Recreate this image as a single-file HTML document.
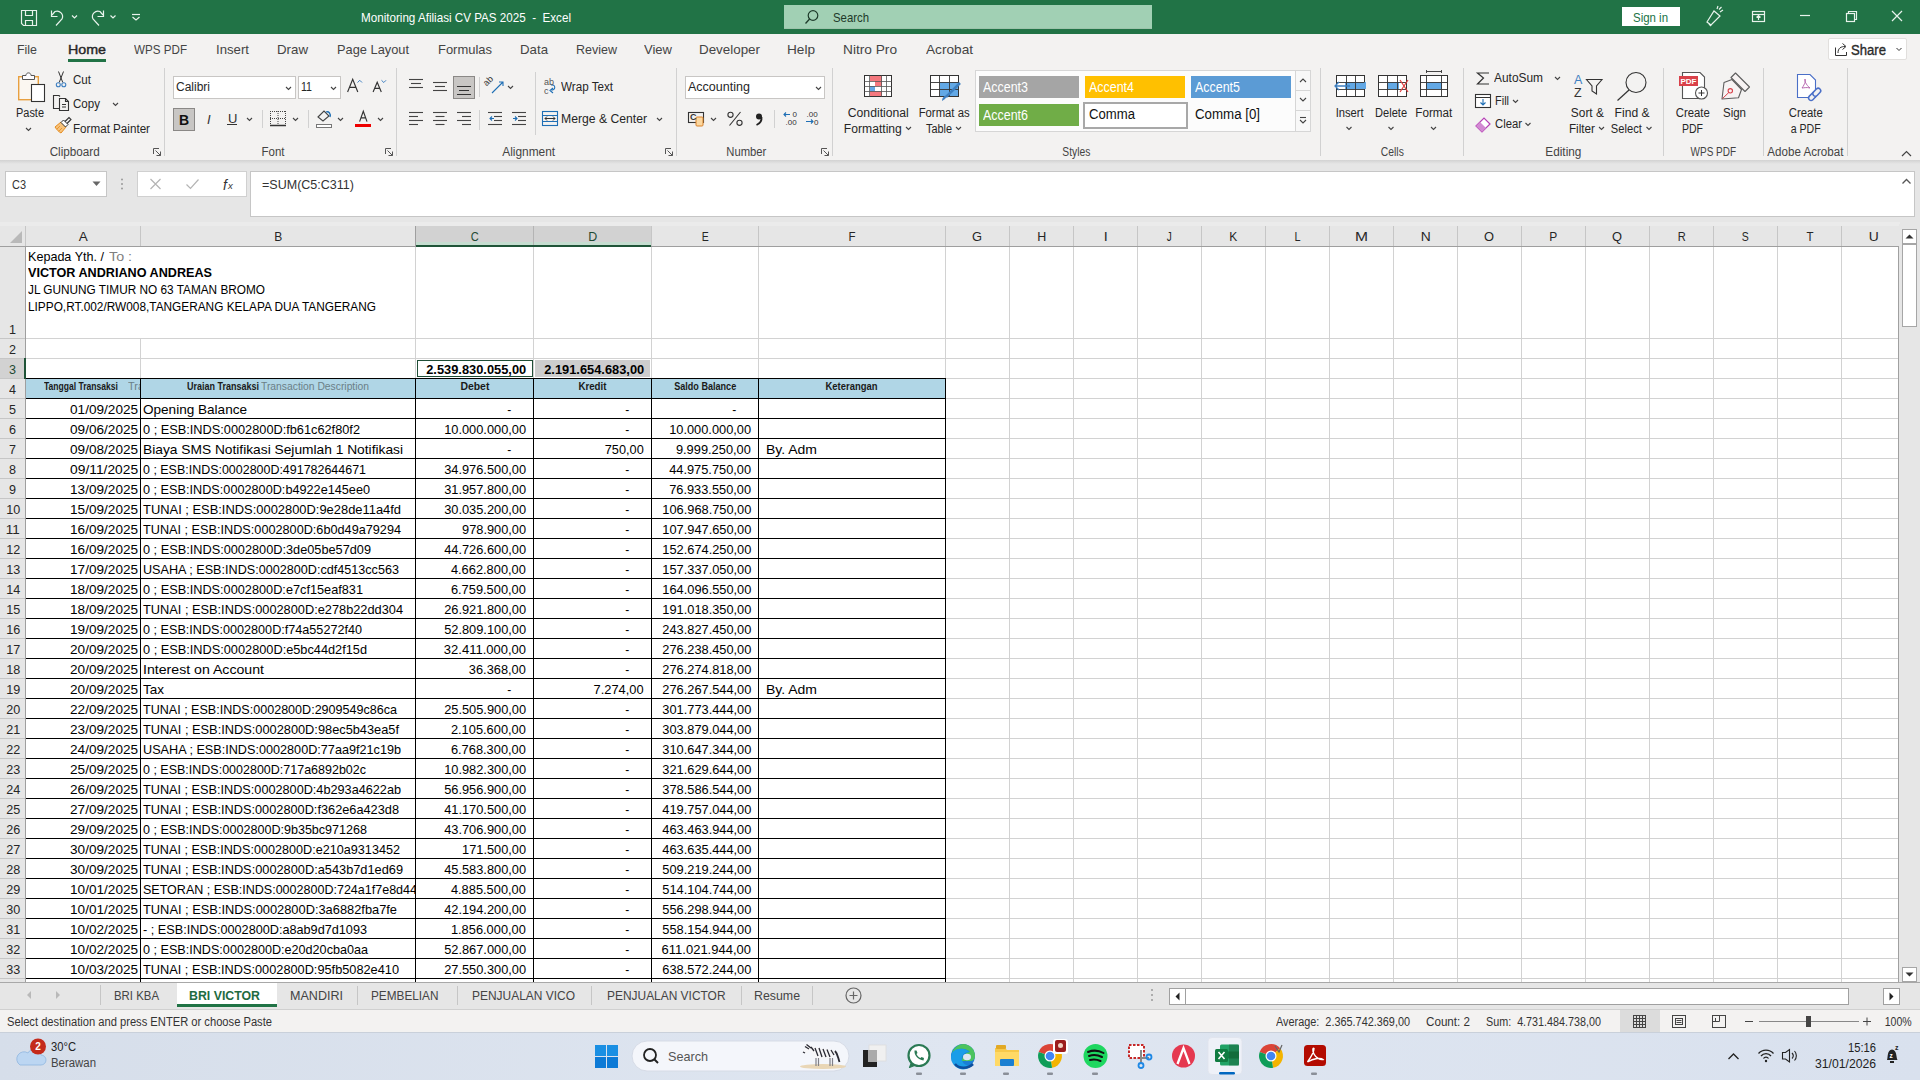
<!DOCTYPE html>
<html><head><meta charset="utf-8"><title>Excel</title>
<style>
html,body{margin:0;padding:0;}
body{width:1920px;height:1080px;overflow:hidden;position:relative;background:#fff;font-family:"Liberation Sans", sans-serif;}
.t{position:absolute;white-space:pre;line-height:1;}
.r{position:absolute;box-sizing:border-box;}
svg.r{overflow:visible;}
</style></head><body>
<div class="r" style="left:0px;top:0px;width:1920px;height:34px;background:#217346;"></div><div class="r" style="left:0px;top:34px;width:1920px;height:126px;background:#f3f2f1;"></div><div class="r" style="left:0px;top:160px;width:1920px;height:64px;background:#e6e6e6;"></div><div class="r" style="left:0px;top:160px;width:1920px;height:4px;background:linear-gradient(#d2d2d2,#e6e6e6);"></div><div class="r" style="left:0px;top:222px;width:1900px;height:24px;background:#e6e6e6;"></div><div class="r" style="left:0px;top:246px;width:25px;height:736px;background:#e6e6e6;"></div><div class="r" style="left:26px;top:247px;width:1873px;height:735px;background:#fff;"></div><svg class="r" style="left:0px;top:0px;" width="1920" height="1080" viewBox="0 0 1920 1080"><rect x="140" y="246" width="1" height="736" fill="#d2d2d2"/><rect x="415" y="246" width="1" height="736" fill="#d2d2d2"/><rect x="533" y="246" width="1" height="736" fill="#d2d2d2"/><rect x="651" y="246" width="1" height="736" fill="#d2d2d2"/><rect x="758" y="246" width="1" height="736" fill="#d2d2d2"/><rect x="945" y="246" width="1" height="736" fill="#d2d2d2"/><rect x="1009" y="246" width="1" height="736" fill="#d2d2d2"/><rect x="1073" y="246" width="1" height="736" fill="#d2d2d2"/><rect x="1137" y="246" width="1" height="736" fill="#d2d2d2"/><rect x="1201" y="246" width="1" height="736" fill="#d2d2d2"/><rect x="1265" y="246" width="1" height="736" fill="#d2d2d2"/><rect x="1329" y="246" width="1" height="736" fill="#d2d2d2"/><rect x="1393" y="246" width="1" height="736" fill="#d2d2d2"/><rect x="1457" y="246" width="1" height="736" fill="#d2d2d2"/><rect x="1521" y="246" width="1" height="736" fill="#d2d2d2"/><rect x="1585" y="246" width="1" height="736" fill="#d2d2d2"/><rect x="1649" y="246" width="1" height="736" fill="#d2d2d2"/><rect x="1713" y="246" width="1" height="736" fill="#d2d2d2"/><rect x="1777" y="246" width="1" height="736" fill="#d2d2d2"/><rect x="1841" y="246" width="1" height="736" fill="#d2d2d2"/><rect x="26" y="338" width="1873" height="1" fill="#d2d2d2"/><rect x="26" y="358" width="1873" height="1" fill="#d2d2d2"/><rect x="26" y="378" width="1873" height="1" fill="#d2d2d2"/><rect x="26" y="398" width="1873" height="1" fill="#d2d2d2"/><rect x="26" y="418" width="1873" height="1" fill="#d2d2d2"/><rect x="26" y="438" width="1873" height="1" fill="#d2d2d2"/><rect x="26" y="458" width="1873" height="1" fill="#d2d2d2"/><rect x="26" y="478" width="1873" height="1" fill="#d2d2d2"/><rect x="26" y="498" width="1873" height="1" fill="#d2d2d2"/><rect x="26" y="518" width="1873" height="1" fill="#d2d2d2"/><rect x="26" y="538" width="1873" height="1" fill="#d2d2d2"/><rect x="26" y="558" width="1873" height="1" fill="#d2d2d2"/><rect x="26" y="578" width="1873" height="1" fill="#d2d2d2"/><rect x="26" y="598" width="1873" height="1" fill="#d2d2d2"/><rect x="26" y="618" width="1873" height="1" fill="#d2d2d2"/><rect x="26" y="638" width="1873" height="1" fill="#d2d2d2"/><rect x="26" y="658" width="1873" height="1" fill="#d2d2d2"/><rect x="26" y="678" width="1873" height="1" fill="#d2d2d2"/><rect x="26" y="698" width="1873" height="1" fill="#d2d2d2"/><rect x="26" y="718" width="1873" height="1" fill="#d2d2d2"/><rect x="26" y="738" width="1873" height="1" fill="#d2d2d2"/><rect x="26" y="758" width="1873" height="1" fill="#d2d2d2"/><rect x="26" y="778" width="1873" height="1" fill="#d2d2d2"/><rect x="26" y="798" width="1873" height="1" fill="#d2d2d2"/><rect x="26" y="818" width="1873" height="1" fill="#d2d2d2"/><rect x="26" y="838" width="1873" height="1" fill="#d2d2d2"/><rect x="26" y="858" width="1873" height="1" fill="#d2d2d2"/><rect x="26" y="878" width="1873" height="1" fill="#d2d2d2"/><rect x="26" y="898" width="1873" height="1" fill="#d2d2d2"/><rect x="26" y="918" width="1873" height="1" fill="#d2d2d2"/><rect x="26" y="938" width="1873" height="1" fill="#d2d2d2"/><rect x="26" y="958" width="1873" height="1" fill="#d2d2d2"/><rect x="26" y="978" width="1873" height="1" fill="#d2d2d2"/></svg><div class="r" style="left:140px;top:247px;width:1px;height:91px;background:#fff;"></div><svg class="r" style="left:0px;top:0px;" width="1920" height="1080" viewBox="0 0 1920 1080"><rect x="0" y="222" width="1900" height="4" fill="#ebebeb"/><rect x="25" y="226" width="1" height="20" fill="#c6c6c6"/><rect x="140" y="226" width="1" height="20" fill="#c6c6c6"/><rect x="415" y="226" width="1" height="20" fill="#c6c6c6"/><rect x="533" y="226" width="1" height="20" fill="#c6c6c6"/><rect x="651" y="226" width="1" height="20" fill="#c6c6c6"/><rect x="758" y="226" width="1" height="20" fill="#c6c6c6"/><rect x="945" y="226" width="1" height="20" fill="#c6c6c6"/><rect x="1009" y="226" width="1" height="20" fill="#c6c6c6"/><rect x="1073" y="226" width="1" height="20" fill="#c6c6c6"/><rect x="1137" y="226" width="1" height="20" fill="#c6c6c6"/><rect x="1201" y="226" width="1" height="20" fill="#c6c6c6"/><rect x="1265" y="226" width="1" height="20" fill="#c6c6c6"/><rect x="1329" y="226" width="1" height="20" fill="#c6c6c6"/><rect x="1393" y="226" width="1" height="20" fill="#c6c6c6"/><rect x="1457" y="226" width="1" height="20" fill="#c6c6c6"/><rect x="1521" y="226" width="1" height="20" fill="#c6c6c6"/><rect x="1585" y="226" width="1" height="20" fill="#c6c6c6"/><rect x="1649" y="226" width="1" height="20" fill="#c6c6c6"/><rect x="1713" y="226" width="1" height="20" fill="#c6c6c6"/><rect x="1777" y="226" width="1" height="20" fill="#c6c6c6"/><rect x="1841" y="226" width="1" height="20" fill="#c6c6c6"/><rect x="0" y="246" width="1900" height="1" fill="#9f9f9f"/><rect x="25" y="246" width="1" height="736" fill="#9f9f9f"/><rect x="416" y="226" width="235" height="16" fill="#d2d2d2"/><rect x="416" y="242" width="235" height="3" fill="#c5ddd0"/><rect x="415" y="226" width="1" height="20" fill="#9f9f9f"/><rect x="533" y="226" width="1" height="19" fill="#b4b4b4"/><rect x="416" y="245" width="235" height="2" fill="#1f5438"/><rect x="0" y="359" width="24" height="19" fill="#d2d2d2"/><rect x="0" y="338" width="25" height="1" fill="#c6c6c6"/><rect x="0" y="358" width="25" height="1" fill="#c6c6c6"/><rect x="0" y="378" width="25" height="1" fill="#c6c6c6"/><rect x="0" y="398" width="25" height="1" fill="#c6c6c6"/><rect x="0" y="418" width="25" height="1" fill="#c6c6c6"/><rect x="0" y="438" width="25" height="1" fill="#c6c6c6"/><rect x="0" y="458" width="25" height="1" fill="#c6c6c6"/><rect x="0" y="478" width="25" height="1" fill="#c6c6c6"/><rect x="0" y="498" width="25" height="1" fill="#c6c6c6"/><rect x="0" y="518" width="25" height="1" fill="#c6c6c6"/><rect x="0" y="538" width="25" height="1" fill="#c6c6c6"/><rect x="0" y="558" width="25" height="1" fill="#c6c6c6"/><rect x="0" y="578" width="25" height="1" fill="#c6c6c6"/><rect x="0" y="598" width="25" height="1" fill="#c6c6c6"/><rect x="0" y="618" width="25" height="1" fill="#c6c6c6"/><rect x="0" y="638" width="25" height="1" fill="#c6c6c6"/><rect x="0" y="658" width="25" height="1" fill="#c6c6c6"/><rect x="0" y="678" width="25" height="1" fill="#c6c6c6"/><rect x="0" y="698" width="25" height="1" fill="#c6c6c6"/><rect x="0" y="718" width="25" height="1" fill="#c6c6c6"/><rect x="0" y="738" width="25" height="1" fill="#c6c6c6"/><rect x="0" y="758" width="25" height="1" fill="#c6c6c6"/><rect x="0" y="778" width="25" height="1" fill="#c6c6c6"/><rect x="0" y="798" width="25" height="1" fill="#c6c6c6"/><rect x="0" y="818" width="25" height="1" fill="#c6c6c6"/><rect x="0" y="838" width="25" height="1" fill="#c6c6c6"/><rect x="0" y="858" width="25" height="1" fill="#c6c6c6"/><rect x="0" y="878" width="25" height="1" fill="#c6c6c6"/><rect x="0" y="898" width="25" height="1" fill="#c6c6c6"/><rect x="0" y="918" width="25" height="1" fill="#c6c6c6"/><rect x="0" y="938" width="25" height="1" fill="#c6c6c6"/><rect x="0" y="958" width="25" height="1" fill="#c6c6c6"/><rect x="0" y="978" width="25" height="1" fill="#c6c6c6"/><path d="M22 231 L22 243 L10 243 Z" fill="#b9b9b9"/></svg><div class="t" style="left:78.66px;top:230.00px;font-size:13px;color:#262626;transform:scaleX(1.0379);transform-origin:center top;">A</div><div class="t" style="left:273.66px;top:230.00px;font-size:13px;color:#262626;transform:scaleX(0.9226);transform-origin:center top;">B</div><div class="t" style="left:469.81px;top:230.00px;font-size:13px;color:#1f4a33;transform:scaleX(0.8521);transform-origin:center top;">C</div><div class="t" style="left:587.81px;top:230.00px;font-size:13px;color:#1f4a33;transform:scaleX(0.9586);transform-origin:center top;">D</div><div class="t" style="left:700.66px;top:230.00px;font-size:13px;color:#262626;transform:scaleX(0.8073);transform-origin:center top;">E</div><div class="t" style="left:848.03px;top:230.00px;font-size:13px;color:#262626;transform:scaleX(0.8815);transform-origin:center top;">F</div><div class="t" style="left:972.44px;top:230.00px;font-size:13px;color:#262626;transform:scaleX(0.9890);transform-origin:center top;">G</div><div class="t" style="left:1036.81px;top:230.00px;font-size:13px;color:#262626;transform:scaleX(0.9586);transform-origin:center top;">H</div><div class="t" style="left:1103.69px;top:230.00px;font-size:13px;color:#262626;transform:scaleX(1.1076);transform-origin:center top;">I</div><div class="t" style="left:1166.25px;top:230.00px;font-size:13px;color:#262626;transform:scaleX(0.7692);transform-origin:center top;">J</div><div class="t" style="left:1229.16px;top:230.00px;font-size:13px;color:#262626;transform:scaleX(0.9226);transform-origin:center top;">K</div><div class="t" style="left:1293.88px;top:230.00px;font-size:13px;color:#262626;transform:scaleX(0.8298);transform-origin:center top;">L</div><div class="t" style="left:1356.09px;top:230.00px;font-size:13px;color:#262626;transform:scaleX(1.2004);transform-origin:center top;">M</div><div class="t" style="left:1420.81px;top:230.00px;font-size:13px;color:#262626;transform:scaleX(1.0651);transform-origin:center top;">N</div><div class="t" style="left:1484.44px;top:230.00px;font-size:13px;color:#262626;transform:scaleX(0.9890);transform-origin:center top;">O</div><div class="t" style="left:1549.16px;top:230.00px;font-size:13px;color:#262626;transform:scaleX(0.9226);transform-origin:center top;">P</div><div class="t" style="left:1612.44px;top:230.00px;font-size:13px;color:#262626;transform:scaleX(0.9890);transform-origin:center top;">Q</div><div class="t" style="left:1676.81px;top:230.00px;font-size:13px;color:#262626;transform:scaleX(0.8521);transform-origin:center top;">R</div><div class="t" style="left:1741.16px;top:230.00px;font-size:13px;color:#262626;transform:scaleX(0.8073);transform-origin:center top;">S</div><div class="t" style="left:1805.53px;top:230.00px;font-size:13px;color:#262626;transform:scaleX(0.8815);transform-origin:center top;">T</div><div class="t" style="left:1869.31px;top:230.00px;font-size:13px;color:#262626;transform:scaleX(1.0651);transform-origin:center top;">U</div><div class="t" style="left:9.38px;top:323.00px;font-size:13px;color:#262626;transform:scaleX(0.9682);transform-origin:center top;">1</div><div class="t" style="left:9.38px;top:343.00px;font-size:13px;color:#262626;transform:scaleX(0.9682);transform-origin:center top;">2</div><div class="t" style="left:9.38px;top:363.00px;font-size:13px;color:#1f4a33;transform:scaleX(0.9682);transform-origin:center top;">3</div><div class="t" style="left:9.38px;top:383.00px;font-size:13px;color:#262626;transform:scaleX(0.9682);transform-origin:center top;">4</div><div class="t" style="left:9.38px;top:403.00px;font-size:13px;color:#262626;transform:scaleX(0.9682);transform-origin:center top;">5</div><div class="t" style="left:9.38px;top:423.00px;font-size:13px;color:#262626;transform:scaleX(0.9682);transform-origin:center top;">6</div><div class="t" style="left:9.38px;top:443.00px;font-size:13px;color:#262626;transform:scaleX(0.9682);transform-origin:center top;">7</div><div class="t" style="left:9.38px;top:463.00px;font-size:13px;color:#262626;transform:scaleX(0.9682);transform-origin:center top;">8</div><div class="t" style="left:9.38px;top:483.00px;font-size:13px;color:#262626;transform:scaleX(0.9682);transform-origin:center top;">9</div><div class="t" style="left:5.77px;top:503.00px;font-size:13px;color:#262626;transform:scaleX(0.9682);transform-origin:center top;">10</div><div class="t" style="left:6.25px;top:523.00px;font-size:13px;color:#262626;transform:scaleX(1.0374);transform-origin:center top;">11</div><div class="t" style="left:5.77px;top:543.00px;font-size:13px;color:#262626;transform:scaleX(0.9682);transform-origin:center top;">12</div><div class="t" style="left:5.77px;top:563.00px;font-size:13px;color:#262626;transform:scaleX(0.9682);transform-origin:center top;">13</div><div class="t" style="left:5.77px;top:583.00px;font-size:13px;color:#262626;transform:scaleX(0.9682);transform-origin:center top;">14</div><div class="t" style="left:5.77px;top:603.00px;font-size:13px;color:#262626;transform:scaleX(0.9682);transform-origin:center top;">15</div><div class="t" style="left:5.77px;top:623.00px;font-size:13px;color:#262626;transform:scaleX(0.9682);transform-origin:center top;">16</div><div class="t" style="left:5.77px;top:643.00px;font-size:13px;color:#262626;transform:scaleX(0.9682);transform-origin:center top;">17</div><div class="t" style="left:5.77px;top:663.00px;font-size:13px;color:#262626;transform:scaleX(0.9682);transform-origin:center top;">18</div><div class="t" style="left:5.77px;top:683.00px;font-size:13px;color:#262626;transform:scaleX(0.9682);transform-origin:center top;">19</div><div class="t" style="left:5.77px;top:703.00px;font-size:13px;color:#262626;transform:scaleX(0.9682);transform-origin:center top;">20</div><div class="t" style="left:5.77px;top:723.00px;font-size:13px;color:#262626;transform:scaleX(0.9682);transform-origin:center top;">21</div><div class="t" style="left:5.77px;top:743.00px;font-size:13px;color:#262626;transform:scaleX(0.9682);transform-origin:center top;">22</div><div class="t" style="left:5.77px;top:763.00px;font-size:13px;color:#262626;transform:scaleX(0.9682);transform-origin:center top;">23</div><div class="t" style="left:5.77px;top:783.00px;font-size:13px;color:#262626;transform:scaleX(0.9682);transform-origin:center top;">24</div><div class="t" style="left:5.77px;top:803.00px;font-size:13px;color:#262626;transform:scaleX(0.9682);transform-origin:center top;">25</div><div class="t" style="left:5.77px;top:823.00px;font-size:13px;color:#262626;transform:scaleX(0.9682);transform-origin:center top;">26</div><div class="t" style="left:5.77px;top:843.00px;font-size:13px;color:#262626;transform:scaleX(0.9682);transform-origin:center top;">27</div><div class="t" style="left:5.77px;top:863.00px;font-size:13px;color:#262626;transform:scaleX(0.9682);transform-origin:center top;">28</div><div class="t" style="left:5.77px;top:883.00px;font-size:13px;color:#262626;transform:scaleX(0.9682);transform-origin:center top;">29</div><div class="t" style="left:5.77px;top:903.00px;font-size:13px;color:#262626;transform:scaleX(0.9682);transform-origin:center top;">30</div><div class="t" style="left:5.77px;top:923.00px;font-size:13px;color:#262626;transform:scaleX(0.9682);transform-origin:center top;">31</div><div class="t" style="left:5.77px;top:943.00px;font-size:13px;color:#262626;transform:scaleX(0.9682);transform-origin:center top;">32</div><div class="t" style="left:5.77px;top:963.00px;font-size:13px;color:#262626;transform:scaleX(0.9682);transform-origin:center top;">33</div><div class="t" style="left:28.00px;top:250.00px;font-size:13px;color:#000;transform:scaleX(0.9676);transform-origin:left top;">Kepada Yth. /</div><div class="t" style="left:109.00px;top:250.00px;font-size:13px;color:#7f7f7f;transform:scaleX(1.0977);transform-origin:left top;">To :</div><div class="t" style="left:28.00px;top:266.92px;font-size:12.5px;color:#000;font-weight:bold;transform:scaleX(1.0099);transform-origin:left top;">VICTOR ANDRIANO ANDREAS</div><div class="t" style="left:28.00px;top:284.42px;font-size:12.5px;color:#000;transform:scaleX(0.9444);transform-origin:left top;">JL GUNUNG TIMUR NO 63 TAMAN BROMO</div><div class="t" style="left:28.00px;top:300.92px;font-size:12.5px;color:#000;transform:scaleX(0.9469);transform-origin:left top;">LIPPO,RT.002/RW008,TANGERANG KELAPA DUA TANGERANG</div><div class="r" style="left:535px;top:360px;width:115px;height:17px;background:#cdcdcd;"></div><div class="r" style="left:417px;top:360px;width:116px;height:17px;background:transparent;border:1px solid #1f4e36;"></div><div class="t" style="left:424.79px;top:363.00px;font-size:13px;color:#000;font-weight:bold;transform:scaleX(0.9881);transform-origin:right top;">2.539.830.055,00</div><div class="t" style="left:542.79px;top:363.00px;font-size:13px;color:#000;font-weight:bold;transform:scaleX(0.9881);transform-origin:right top;">2.191.654.683,00</div><div class="r" style="left:26px;top:378px;width:919px;height:20px;background:#b0d6e6;"></div><div class="t" style="left:44.00px;top:381.54px;font-size:10px;color:#1a1a1a;font-weight:bold;transform:scaleX(0.8553);transform-origin:left top;">Tanggal Transaksi</div><div class="t" style="left:127.50px;top:381.54px;font-size:10px;color:#6b7f86;transform:scaleX(1.0937);transform-origin:left top;">Tra</div><div class="r" style="left:140px;top:379px;width:7px;height:19px;background:#b0d6e6;"></div><div class="t" style="left:186.50px;top:381.54px;font-size:10px;color:#1a1a1a;font-weight:bold;transform:scaleX(0.8995);transform-origin:left top;">Uraian Transaksi</div><div class="t" style="left:261.00px;top:381.54px;font-size:10px;color:#6b7f86;transform:scaleX(1.0318);transform-origin:left top;">Transaction Description</div><div class="t" style="left:460.61px;top:381.54px;font-size:10px;color:#1a1a1a;font-weight:bold;transform:scaleX(1.0438);transform-origin:center top;">Debet</div><div class="t" style="left:578.05px;top:381.54px;font-size:10px;color:#1a1a1a;font-weight:bold;transform:scaleX(0.9691);transform-origin:center top;">Kredit</div><div class="t" style="left:670.82px;top:381.54px;font-size:10px;color:#1a1a1a;font-weight:bold;transform:scaleX(0.9070);transform-origin:center top;">Saldo Balance</div><div class="t" style="left:824.49px;top:381.54px;font-size:10px;color:#1a1a1a;font-weight:bold;transform:scaleX(0.9452);transform-origin:center top;">Keterangan</div><div class="r" style="left:0;top:0;width:1920px;height:1080px;overflow:hidden;"><div class="t" style="left:72.94px;top:403.00px;font-size:13px;color:#000;transform:scaleX(1.0451);transform-origin:right top;">01/09/2025</div><div class="t" style="left:143.00px;top:403.00px;font-size:13px;color:#000;transform:scaleX(1.0427);transform-origin:left top;">Opening Balance</div><div class="t" style="left:506.84px;top:403.00px;font-size:13px;color:#000;transform:scaleX(0.9239);transform-origin:center top;">-</div><div class="t" style="left:624.84px;top:403.00px;font-size:13px;color:#000;transform:scaleX(0.9239);transform-origin:center top;">-</div><div class="t" style="left:731.84px;top:403.00px;font-size:13px;color:#000;transform:scaleX(0.9239);transform-origin:center top;">-</div><div class="t" style="left:72.94px;top:423.00px;font-size:13px;color:#000;transform:scaleX(1.0451);transform-origin:right top;">09/06/2025</div><div class="t" style="left:143.00px;top:423.00px;font-size:13px;color:#000;transform:scaleX(0.9812);transform-origin:left top;">0 ; ESB:INDS:0002800D:fb61c62f80f2</div><div class="t" style="left:442.86px;top:423.00px;font-size:13px;color:#000;transform:scaleX(0.9863);transform-origin:right top;">10.000.000,00</div><div class="t" style="left:624.84px;top:423.00px;font-size:13px;color:#000;transform:scaleX(0.9239);transform-origin:center top;">-</div><div class="t" style="left:667.86px;top:423.00px;font-size:13px;color:#000;transform:scaleX(0.9863);transform-origin:right top;">10.000.000,00</div><div class="t" style="left:72.94px;top:443.00px;font-size:13px;color:#000;transform:scaleX(1.0451);transform-origin:right top;">09/08/2025</div><div class="t" style="left:143.00px;top:443.00px;font-size:13px;color:#000;transform:scaleX(1.0584);transform-origin:left top;">Biaya SMS Notifikasi Sejumlah 1 Notifikasi</div><div class="t" style="left:506.84px;top:443.00px;font-size:13px;color:#000;transform:scaleX(0.9239);transform-origin:center top;">-</div><div class="t" style="left:604.24px;top:443.00px;font-size:13px;color:#000;transform:scaleX(0.9808);transform-origin:right top;">750,00</div><div class="t" style="left:675.09px;top:443.00px;font-size:13px;color:#000;transform:scaleX(0.9881);transform-origin:right top;">9.999.250,00</div><div class="t" style="left:766.00px;top:443.00px;font-size:13px;color:#000;transform:scaleX(1.0750);transform-origin:left top;">By. Adm</div><div class="t" style="left:73.90px;top:463.00px;font-size:13px;color:#000;transform:scaleX(1.0608);transform-origin:right top;">09/11/2025</div><div class="t" style="left:143.00px;top:463.00px;font-size:13px;color:#000;transform:scaleX(0.9582);transform-origin:left top;">0 ; ESB:INDS:0002800D:491782644671</div><div class="t" style="left:442.86px;top:463.00px;font-size:13px;color:#000;transform:scaleX(0.9863);transform-origin:right top;">34.976.500,00</div><div class="t" style="left:624.84px;top:463.00px;font-size:13px;color:#000;transform:scaleX(0.9239);transform-origin:center top;">-</div><div class="t" style="left:667.86px;top:463.00px;font-size:13px;color:#000;transform:scaleX(0.9863);transform-origin:right top;">44.975.750,00</div><div class="t" style="left:72.94px;top:483.00px;font-size:13px;color:#000;transform:scaleX(1.0451);transform-origin:right top;">13/09/2025</div><div class="t" style="left:143.00px;top:483.00px;font-size:13px;color:#000;transform:scaleX(0.9754);transform-origin:left top;">0 ; ESB:INDS:0002800D:b4922e145ee0</div><div class="t" style="left:442.86px;top:483.00px;font-size:13px;color:#000;transform:scaleX(0.9863);transform-origin:right top;">31.957.800,00</div><div class="t" style="left:624.84px;top:483.00px;font-size:13px;color:#000;transform:scaleX(0.9239);transform-origin:center top;">-</div><div class="t" style="left:667.86px;top:483.00px;font-size:13px;color:#000;transform:scaleX(0.9863);transform-origin:right top;">76.933.550,00</div><div class="t" style="left:72.94px;top:503.00px;font-size:13px;color:#000;transform:scaleX(1.0451);transform-origin:right top;">15/09/2025</div><div class="t" style="left:143.00px;top:503.00px;font-size:13px;color:#000;transform:scaleX(0.9926);transform-origin:left top;">TUNAI ; ESB:INDS:0002800D:9e28de11a4fd</div><div class="t" style="left:442.86px;top:503.00px;font-size:13px;color:#000;transform:scaleX(0.9863);transform-origin:right top;">30.035.200,00</div><div class="t" style="left:624.84px;top:503.00px;font-size:13px;color:#000;transform:scaleX(0.9239);transform-origin:center top;">-</div><div class="t" style="left:660.63px;top:503.00px;font-size:13px;color:#000;transform:scaleX(0.9849);transform-origin:right top;">106.968.750,00</div><div class="t" style="left:72.94px;top:523.00px;font-size:13px;color:#000;transform:scaleX(1.0451);transform-origin:right top;">16/09/2025</div><div class="t" style="left:143.00px;top:523.00px;font-size:13px;color:#000;transform:scaleX(0.9754);transform-origin:left top;">TUNAI ; ESB:INDS:0002800D:6b0d49a79294</div><div class="t" style="left:460.94px;top:523.00px;font-size:13px;color:#000;transform:scaleX(0.9836);transform-origin:right top;">978.900,00</div><div class="t" style="left:624.84px;top:523.00px;font-size:13px;color:#000;transform:scaleX(0.9239);transform-origin:center top;">-</div><div class="t" style="left:660.63px;top:523.00px;font-size:13px;color:#000;transform:scaleX(0.9849);transform-origin:right top;">107.947.650,00</div><div class="t" style="left:72.94px;top:543.00px;font-size:13px;color:#000;transform:scaleX(1.0451);transform-origin:right top;">16/09/2025</div><div class="t" style="left:143.00px;top:543.00px;font-size:13px;color:#000;transform:scaleX(0.9796);transform-origin:left top;">0 ; ESB:INDS:0002800D:3de05be57d09</div><div class="t" style="left:442.86px;top:543.00px;font-size:13px;color:#000;transform:scaleX(0.9863);transform-origin:right top;">44.726.600,00</div><div class="t" style="left:624.84px;top:543.00px;font-size:13px;color:#000;transform:scaleX(0.9239);transform-origin:center top;">-</div><div class="t" style="left:660.63px;top:543.00px;font-size:13px;color:#000;transform:scaleX(0.9849);transform-origin:right top;">152.674.250,00</div><div class="t" style="left:72.94px;top:563.00px;font-size:13px;color:#000;transform:scaleX(1.0451);transform-origin:right top;">17/09/2025</div><div class="t" style="left:143.00px;top:563.00px;font-size:13px;color:#000;transform:scaleX(0.9705);transform-origin:left top;">USAHA ; ESB:INDS:0002800D:cdf4513cc563</div><div class="t" style="left:450.09px;top:563.00px;font-size:13px;color:#000;transform:scaleX(0.9881);transform-origin:right top;">4.662.800,00</div><div class="t" style="left:624.84px;top:563.00px;font-size:13px;color:#000;transform:scaleX(0.9239);transform-origin:center top;">-</div><div class="t" style="left:660.63px;top:563.00px;font-size:13px;color:#000;transform:scaleX(0.9849);transform-origin:right top;">157.337.050,00</div><div class="t" style="left:72.94px;top:583.00px;font-size:13px;color:#000;transform:scaleX(1.0451);transform-origin:right top;">18/09/2025</div><div class="t" style="left:143.00px;top:583.00px;font-size:13px;color:#000;transform:scaleX(0.9788);transform-origin:left top;">0 ; ESB:INDS:0002800D:e7cf15eaf831</div><div class="t" style="left:450.09px;top:583.00px;font-size:13px;color:#000;transform:scaleX(0.9881);transform-origin:right top;">6.759.500,00</div><div class="t" style="left:624.84px;top:583.00px;font-size:13px;color:#000;transform:scaleX(0.9239);transform-origin:center top;">-</div><div class="t" style="left:660.63px;top:583.00px;font-size:13px;color:#000;transform:scaleX(0.9849);transform-origin:right top;">164.096.550,00</div><div class="t" style="left:72.94px;top:603.00px;font-size:13px;color:#000;transform:scaleX(1.0451);transform-origin:right top;">18/09/2025</div><div class="t" style="left:143.00px;top:603.00px;font-size:13px;color:#000;transform:scaleX(0.9830);transform-origin:left top;">TUNAI ; ESB:INDS:0002800D:e278b22dd304</div><div class="t" style="left:442.86px;top:603.00px;font-size:13px;color:#000;transform:scaleX(0.9863);transform-origin:right top;">26.921.800,00</div><div class="t" style="left:624.84px;top:603.00px;font-size:13px;color:#000;transform:scaleX(0.9239);transform-origin:center top;">-</div><div class="t" style="left:660.63px;top:603.00px;font-size:13px;color:#000;transform:scaleX(0.9849);transform-origin:right top;">191.018.350,00</div><div class="t" style="left:72.94px;top:623.00px;font-size:13px;color:#000;transform:scaleX(1.0451);transform-origin:right top;">19/09/2025</div><div class="t" style="left:143.00px;top:623.00px;font-size:13px;color:#000;transform:scaleX(0.9712);transform-origin:left top;">0 ; ESB:INDS:0002800D:f74a55272f40</div><div class="t" style="left:442.86px;top:623.00px;font-size:13px;color:#000;transform:scaleX(0.9863);transform-origin:right top;">52.809.100,00</div><div class="t" style="left:624.84px;top:623.00px;font-size:13px;color:#000;transform:scaleX(0.9239);transform-origin:center top;">-</div><div class="t" style="left:660.63px;top:623.00px;font-size:13px;color:#000;transform:scaleX(0.9849);transform-origin:right top;">243.827.450,00</div><div class="t" style="left:72.94px;top:643.00px;font-size:13px;color:#000;transform:scaleX(1.0451);transform-origin:right top;">20/09/2025</div><div class="t" style="left:143.00px;top:643.00px;font-size:13px;color:#000;transform:scaleX(0.9808);transform-origin:left top;">0 ; ESB:INDS:0002800D:e5bc44d2f15d</div><div class="t" style="left:443.83px;top:643.00px;font-size:13px;color:#000;">32.411.000,00</div><div class="t" style="left:624.84px;top:643.00px;font-size:13px;color:#000;transform:scaleX(0.9239);transform-origin:center top;">-</div><div class="t" style="left:660.63px;top:643.00px;font-size:13px;color:#000;transform:scaleX(0.9849);transform-origin:right top;">276.238.450,00</div><div class="t" style="left:72.94px;top:663.00px;font-size:13px;color:#000;transform:scaleX(1.0451);transform-origin:right top;">20/09/2025</div><div class="t" style="left:143.00px;top:663.00px;font-size:13px;color:#000;transform:scaleX(1.0872);transform-origin:left top;">Interest on Account</div><div class="t" style="left:468.17px;top:663.00px;font-size:13px;color:#000;transform:scaleX(0.9856);transform-origin:right top;">36.368,00</div><div class="t" style="left:624.84px;top:663.00px;font-size:13px;color:#000;transform:scaleX(0.9239);transform-origin:center top;">-</div><div class="t" style="left:660.63px;top:663.00px;font-size:13px;color:#000;transform:scaleX(0.9849);transform-origin:right top;">276.274.818,00</div><div class="t" style="left:72.94px;top:683.00px;font-size:13px;color:#000;transform:scaleX(1.0451);transform-origin:right top;">20/09/2025</div><div class="t" style="left:143.00px;top:683.00px;font-size:13px;color:#000;transform:scaleX(1.0381);transform-origin:left top;">Tax</div><div class="t" style="left:506.84px;top:683.00px;font-size:13px;color:#000;transform:scaleX(0.9239);transform-origin:center top;">-</div><div class="t" style="left:593.40px;top:683.00px;font-size:13px;color:#000;transform:scaleX(0.9881);transform-origin:right top;">7.274,00</div><div class="t" style="left:660.63px;top:683.00px;font-size:13px;color:#000;transform:scaleX(0.9849);transform-origin:right top;">276.267.544,00</div><div class="t" style="left:766.00px;top:683.00px;font-size:13px;color:#000;transform:scaleX(1.0750);transform-origin:left top;">By. Adm</div><div class="t" style="left:72.94px;top:703.00px;font-size:13px;color:#000;transform:scaleX(1.0451);transform-origin:right top;">22/09/2025</div><div class="t" style="left:143.00px;top:703.00px;font-size:13px;color:#000;transform:scaleX(0.9656);transform-origin:left top;">TUNAI ; ESB:INDS:0002800D:2909549c86ca</div><div class="t" style="left:442.86px;top:703.00px;font-size:13px;color:#000;transform:scaleX(0.9863);transform-origin:right top;">25.505.900,00</div><div class="t" style="left:624.84px;top:703.00px;font-size:13px;color:#000;transform:scaleX(0.9239);transform-origin:center top;">-</div><div class="t" style="left:660.63px;top:703.00px;font-size:13px;color:#000;transform:scaleX(0.9849);transform-origin:right top;">301.773.444,00</div><div class="t" style="left:72.94px;top:723.00px;font-size:13px;color:#000;transform:scaleX(1.0451);transform-origin:right top;">23/09/2025</div><div class="t" style="left:143.00px;top:723.00px;font-size:13px;color:#000;transform:scaleX(0.9840);transform-origin:left top;">TUNAI ; ESB:INDS:0002800D:98ec5b43ea5f</div><div class="t" style="left:450.09px;top:723.00px;font-size:13px;color:#000;transform:scaleX(0.9881);transform-origin:right top;">2.105.600,00</div><div class="t" style="left:624.84px;top:723.00px;font-size:13px;color:#000;transform:scaleX(0.9239);transform-origin:center top;">-</div><div class="t" style="left:660.63px;top:723.00px;font-size:13px;color:#000;transform:scaleX(0.9849);transform-origin:right top;">303.879.044,00</div><div class="t" style="left:72.94px;top:743.00px;font-size:13px;color:#000;transform:scaleX(1.0451);transform-origin:right top;">24/09/2025</div><div class="t" style="left:143.00px;top:743.00px;font-size:13px;color:#000;transform:scaleX(0.9727);transform-origin:left top;">USAHA ; ESB:INDS:0002800D:77aa9f21c19b</div><div class="t" style="left:450.09px;top:743.00px;font-size:13px;color:#000;transform:scaleX(0.9881);transform-origin:right top;">6.768.300,00</div><div class="t" style="left:624.84px;top:743.00px;font-size:13px;color:#000;transform:scaleX(0.9239);transform-origin:center top;">-</div><div class="t" style="left:660.63px;top:743.00px;font-size:13px;color:#000;transform:scaleX(0.9849);transform-origin:right top;">310.647.344,00</div><div class="t" style="left:72.94px;top:763.00px;font-size:13px;color:#000;transform:scaleX(1.0451);transform-origin:right top;">25/09/2025</div><div class="t" style="left:143.00px;top:763.00px;font-size:13px;color:#000;transform:scaleX(0.9612);transform-origin:left top;">0 ; ESB:INDS:0002800D:717a6892b02c</div><div class="t" style="left:442.86px;top:763.00px;font-size:13px;color:#000;transform:scaleX(0.9863);transform-origin:right top;">10.982.300,00</div><div class="t" style="left:624.84px;top:763.00px;font-size:13px;color:#000;transform:scaleX(0.9239);transform-origin:center top;">-</div><div class="t" style="left:660.63px;top:763.00px;font-size:13px;color:#000;transform:scaleX(0.9849);transform-origin:right top;">321.629.644,00</div><div class="t" style="left:72.94px;top:783.00px;font-size:13px;color:#000;transform:scaleX(1.0451);transform-origin:right top;">26/09/2025</div><div class="t" style="left:143.00px;top:783.00px;font-size:13px;color:#000;transform:scaleX(0.9754);transform-origin:left top;">TUNAI ; ESB:INDS:0002800D:4b293a4622ab</div><div class="t" style="left:442.86px;top:783.00px;font-size:13px;color:#000;transform:scaleX(0.9863);transform-origin:right top;">56.956.900,00</div><div class="t" style="left:624.84px;top:783.00px;font-size:13px;color:#000;transform:scaleX(0.9239);transform-origin:center top;">-</div><div class="t" style="left:660.63px;top:783.00px;font-size:13px;color:#000;transform:scaleX(0.9849);transform-origin:right top;">378.586.544,00</div><div class="t" style="left:72.94px;top:803.00px;font-size:13px;color:#000;transform:scaleX(1.0451);transform-origin:right top;">27/09/2025</div><div class="t" style="left:143.00px;top:803.00px;font-size:13px;color:#000;transform:scaleX(0.9813);transform-origin:left top;">TUNAI ; ESB:INDS:0002800D:f362e6a423d8</div><div class="t" style="left:442.86px;top:803.00px;font-size:13px;color:#000;transform:scaleX(0.9863);transform-origin:right top;">41.170.500,00</div><div class="t" style="left:624.84px;top:803.00px;font-size:13px;color:#000;transform:scaleX(0.9239);transform-origin:center top;">-</div><div class="t" style="left:660.63px;top:803.00px;font-size:13px;color:#000;transform:scaleX(0.9849);transform-origin:right top;">419.757.044,00</div><div class="t" style="left:72.94px;top:823.00px;font-size:13px;color:#000;transform:scaleX(1.0451);transform-origin:right top;">29/09/2025</div><div class="t" style="left:143.00px;top:823.00px;font-size:13px;color:#000;transform:scaleX(0.9655);transform-origin:left top;">0 ; ESB:INDS:0002800D:9b35bc971268</div><div class="t" style="left:442.86px;top:823.00px;font-size:13px;color:#000;transform:scaleX(0.9863);transform-origin:right top;">43.706.900,00</div><div class="t" style="left:624.84px;top:823.00px;font-size:13px;color:#000;transform:scaleX(0.9239);transform-origin:center top;">-</div><div class="t" style="left:660.63px;top:823.00px;font-size:13px;color:#000;transform:scaleX(0.9849);transform-origin:right top;">463.463.944,00</div><div class="t" style="left:72.94px;top:843.00px;font-size:13px;color:#000;transform:scaleX(1.0451);transform-origin:right top;">30/09/2025</div><div class="t" style="left:143.00px;top:843.00px;font-size:13px;color:#000;transform:scaleX(0.9716);transform-origin:left top;">TUNAI ; ESB:INDS:0002800D:e210a9313452</div><div class="t" style="left:460.94px;top:843.00px;font-size:13px;color:#000;transform:scaleX(0.9836);transform-origin:right top;">171.500,00</div><div class="t" style="left:624.84px;top:843.00px;font-size:13px;color:#000;transform:scaleX(0.9239);transform-origin:center top;">-</div><div class="t" style="left:660.63px;top:843.00px;font-size:13px;color:#000;transform:scaleX(0.9849);transform-origin:right top;">463.635.444,00</div><div class="t" style="left:72.94px;top:863.00px;font-size:13px;color:#000;transform:scaleX(1.0451);transform-origin:right top;">30/09/2025</div><div class="t" style="left:143.00px;top:863.00px;font-size:13px;color:#000;transform:scaleX(0.9830);transform-origin:left top;">TUNAI ; ESB:INDS:0002800D:a543b7d1ed69</div><div class="t" style="left:442.86px;top:863.00px;font-size:13px;color:#000;transform:scaleX(0.9863);transform-origin:right top;">45.583.800,00</div><div class="t" style="left:624.84px;top:863.00px;font-size:13px;color:#000;transform:scaleX(0.9239);transform-origin:center top;">-</div><div class="t" style="left:660.63px;top:863.00px;font-size:13px;color:#000;transform:scaleX(0.9849);transform-origin:right top;">509.219.244,00</div><div class="t" style="left:72.94px;top:883.00px;font-size:13px;color:#000;transform:scaleX(1.0451);transform-origin:right top;">10/01/2025</div><div class="t" style="left:143.00px;top:883.00px;font-size:13px;color:#000;transform:scaleX(0.9631);transform-origin:left top;">SETORAN ; ESB:INDS:0002800D:724a1f7e8d44</div><div class="t" style="left:450.09px;top:883.00px;font-size:13px;color:#000;transform:scaleX(0.9881);transform-origin:right top;">4.885.500,00</div><div class="t" style="left:624.84px;top:883.00px;font-size:13px;color:#000;transform:scaleX(0.9239);transform-origin:center top;">-</div><div class="t" style="left:660.63px;top:883.00px;font-size:13px;color:#000;transform:scaleX(0.9849);transform-origin:right top;">514.104.744,00</div><div class="t" style="left:72.94px;top:903.00px;font-size:13px;color:#000;transform:scaleX(1.0451);transform-origin:right top;">10/01/2025</div><div class="t" style="left:143.00px;top:903.00px;font-size:13px;color:#000;transform:scaleX(0.9873);transform-origin:left top;">TUNAI ; ESB:INDS:0002800D:3a6882fba7fe</div><div class="t" style="left:442.86px;top:903.00px;font-size:13px;color:#000;transform:scaleX(0.9863);transform-origin:right top;">42.194.200,00</div><div class="t" style="left:624.84px;top:903.00px;font-size:13px;color:#000;transform:scaleX(0.9239);transform-origin:center top;">-</div><div class="t" style="left:660.63px;top:903.00px;font-size:13px;color:#000;transform:scaleX(0.9849);transform-origin:right top;">556.298.944,00</div><div class="t" style="left:72.94px;top:923.00px;font-size:13px;color:#000;transform:scaleX(1.0451);transform-origin:right top;">10/02/2025</div><div class="t" style="left:143.00px;top:923.00px;font-size:13px;color:#000;transform:scaleX(0.9746);transform-origin:left top;">- ; ESB:INDS:0002800D:a8ab9d7d1093</div><div class="t" style="left:450.09px;top:923.00px;font-size:13px;color:#000;transform:scaleX(0.9881);transform-origin:right top;">1.856.000,00</div><div class="t" style="left:624.84px;top:923.00px;font-size:13px;color:#000;transform:scaleX(0.9239);transform-origin:center top;">-</div><div class="t" style="left:660.63px;top:923.00px;font-size:13px;color:#000;transform:scaleX(0.9849);transform-origin:right top;">558.154.944,00</div><div class="t" style="left:72.94px;top:943.00px;font-size:13px;color:#000;transform:scaleX(1.0451);transform-origin:right top;">10/02/2025</div><div class="t" style="left:143.00px;top:943.00px;font-size:13px;color:#000;transform:scaleX(0.9698);transform-origin:left top;">0 ; ESB:INDS:0002800D:e20d20cba0aa</div><div class="t" style="left:442.86px;top:943.00px;font-size:13px;color:#000;transform:scaleX(0.9863);transform-origin:right top;">52.867.000,00</div><div class="t" style="left:624.84px;top:943.00px;font-size:13px;color:#000;transform:scaleX(0.9239);transform-origin:center top;">-</div><div class="t" style="left:661.60px;top:943.00px;font-size:13px;color:#000;">611.021.944,00</div><div class="t" style="left:72.94px;top:963.00px;font-size:13px;color:#000;transform:scaleX(1.0451);transform-origin:right top;">10/03/2025</div><div class="t" style="left:143.00px;top:963.00px;font-size:13px;color:#000;transform:scaleX(0.9813);transform-origin:left top;">TUNAI ; ESB:INDS:0002800D:95fb5082e410</div><div class="t" style="left:442.86px;top:963.00px;font-size:13px;color:#000;transform:scaleX(0.9863);transform-origin:right top;">27.550.300,00</div><div class="t" style="left:624.84px;top:963.00px;font-size:13px;color:#000;transform:scaleX(0.9239);transform-origin:center top;">-</div><div class="t" style="left:660.63px;top:963.00px;font-size:13px;color:#000;transform:scaleX(0.9849);transform-origin:right top;">638.572.244,00</div></div><div class="r" style="left:416px;top:879px;width:117px;height:19px;background:#fff;"></div><div class="t" style="left:450.09px;top:883.00px;font-size:13px;color:#000;transform:scaleX(0.9881);transform-origin:right top;">4.885.500,00</div><svg class="r" style="left:0px;top:0px;" width="1920" height="1080" viewBox="0 0 1920 1080"><rect x="25" y="378" width="1" height="604" fill="#000"/><rect x="140" y="378" width="1" height="604" fill="#000"/><rect x="415" y="378" width="1" height="604" fill="#000"/><rect x="533" y="378" width="1" height="604" fill="#000"/><rect x="651" y="378" width="1" height="604" fill="#000"/><rect x="758" y="378" width="1" height="604" fill="#000"/><rect x="945" y="378" width="1" height="604" fill="#000"/><rect x="26" y="378" width="920" height="1" fill="#000"/><rect x="26" y="398" width="920" height="1" fill="#000"/><rect x="26" y="418" width="920" height="1" fill="#000"/><rect x="26" y="438" width="920" height="1" fill="#000"/><rect x="26" y="458" width="920" height="1" fill="#000"/><rect x="26" y="478" width="920" height="1" fill="#000"/><rect x="26" y="498" width="920" height="1" fill="#000"/><rect x="26" y="518" width="920" height="1" fill="#000"/><rect x="26" y="538" width="920" height="1" fill="#000"/><rect x="26" y="558" width="920" height="1" fill="#000"/><rect x="26" y="578" width="920" height="1" fill="#000"/><rect x="26" y="598" width="920" height="1" fill="#000"/><rect x="26" y="618" width="920" height="1" fill="#000"/><rect x="26" y="638" width="920" height="1" fill="#000"/><rect x="26" y="658" width="920" height="1" fill="#000"/><rect x="26" y="678" width="920" height="1" fill="#000"/><rect x="26" y="698" width="920" height="1" fill="#000"/><rect x="26" y="718" width="920" height="1" fill="#000"/><rect x="26" y="738" width="920" height="1" fill="#000"/><rect x="26" y="758" width="920" height="1" fill="#000"/><rect x="26" y="778" width="920" height="1" fill="#000"/><rect x="26" y="798" width="920" height="1" fill="#000"/><rect x="26" y="818" width="920" height="1" fill="#000"/><rect x="26" y="838" width="920" height="1" fill="#000"/><rect x="26" y="858" width="920" height="1" fill="#000"/><rect x="26" y="878" width="920" height="1" fill="#000"/><rect x="26" y="898" width="920" height="1" fill="#000"/><rect x="26" y="918" width="920" height="1" fill="#000"/><rect x="26" y="938" width="920" height="1" fill="#000"/><rect x="26" y="958" width="920" height="1" fill="#000"/><rect x="26" y="978" width="920" height="1" fill="#000"/></svg><div class="r" style="left:25px;top:378px;width:1px;height:604px;background:#9f9f9f;"></div><div class="r" style="left:24px;top:358px;width:2px;height:21px;background:#1f5438;"></div><div class="r" style="left:1899px;top:224px;width:21px;height:758px;background:#e6e6e6;"></div><div class="r" style="left:1902px;top:229px;width:15px;height:15px;background:#fff;border:1px solid #a6a6a6;"></div><svg class="r" style="left:1902px;top:229px;" width="15" height="15" viewBox="0 0 15 15"><path d="M3.5 9.5 L7.5 5.5 L11.5 9.5 Z" fill="#333"/></svg><div class="r" style="left:1902px;top:244px;width:15px;height:83px;background:#fff;border:1px solid #a6a6a6;"></div><div class="r" style="left:1898px;top:246px;width:1px;height:736px;background:#a0a0a0;"></div><div class="r" style="left:1902px;top:967px;width:15px;height:15px;background:#fff;border:1px solid #a6a6a6;"></div><svg class="r" style="left:1902px;top:967px;" width="15" height="15" viewBox="0 0 15 15"><path d="M3.5 5.5 L7.5 9.5 L11.5 5.5 Z" fill="#333"/></svg><div class="r" style="left:0px;top:982px;width:1920px;height:28px;background:#e6e6e6;"></div><div class="r" style="left:0px;top:982px;width:1920px;height:1px;background:#a8a8a8;"></div><div class="r" style="left:0px;top:1009px;width:1920px;height:1px;background:#d0d0d0;"></div><svg class="r" style="left:0px;top:979px;" width="200" height="31" viewBox="0 0 200 31"><path d="M31 12 L27 16 L31 20 Z" fill="#b9b9b9"/><path d="M56 12 L60 16 L56 20 Z" fill="#b9b9b9"/><rect x="100" y="6" width="1" height="20" fill="#c6c6c6"/></svg><div class="r" style="left:177px;top:983px;width:100px;height:24px;background:#fff;"></div><div class="r" style="left:177px;top:1004px;width:100px;height:3px;background:#217346;"></div><div class="t" style="left:114.00px;top:988.57px;font-size:13.5px;color:#444;transform:scaleX(0.8448);transform-origin:left top;">BRI KBA</div><div class="t" style="left:189.00px;top:988.57px;font-size:13.5px;color:#1e6b41;font-weight:bold;transform:scaleX(0.9131);transform-origin:left top;">BRI VICTOR</div><div class="t" style="left:290.00px;top:988.57px;font-size:13.5px;color:#444;transform:scaleX(0.9298);transform-origin:left top;">MANDIRI</div><div class="t" style="left:370.50px;top:988.57px;font-size:13.5px;color:#444;transform:scaleX(0.8735);transform-origin:left top;">PEMBELIAN</div><div class="t" style="left:472.00px;top:988.57px;font-size:13.5px;color:#444;transform:scaleX(0.8858);transform-origin:left top;">PENJUALAN VICO</div><div class="t" style="left:606.50px;top:988.57px;font-size:13.5px;color:#444;transform:scaleX(0.8841);transform-origin:left top;">PENJUALAN VICTOR</div><div class="t" style="left:754.00px;top:988.57px;font-size:13.5px;color:#444;transform:scaleX(0.9150);transform-origin:left top;">Resume</div><div class="r" style="left:357px;top:986px;width:1px;height:19px;background:#c6c6c6;"></div><div class="r" style="left:457px;top:986px;width:1px;height:19px;background:#c6c6c6;"></div><div class="r" style="left:591px;top:986px;width:1px;height:19px;background:#c6c6c6;"></div><div class="r" style="left:741px;top:986px;width:1px;height:19px;background:#c6c6c6;"></div><div class="r" style="left:812px;top:986px;width:1px;height:19px;background:#c6c6c6;"></div><svg class="r" style="left:843px;top:985px;" width="22" height="22" viewBox="0 0 22 22"><circle cx="10.5" cy="10.5" r="7.5" fill="none" stroke="#666" stroke-width="1.2"/><path d="M10.5 6.5 V14.5 M6.5 10.5 H14.5" stroke="#666" stroke-width="1.2"/></svg><svg class="r" style="left:1148px;top:985px;" width="8" height="20" viewBox="0 0 8 20"><circle cx="4" cy="5" r="1" fill="#999"/><circle cx="4" cy="10" r="1" fill="#999"/><circle cx="4" cy="15" r="1" fill="#999"/></svg><div class="r" style="left:1169px;top:988px;width:17px;height:17px;background:#fff;border:1px solid #a0a0a0;"></div><div class="r" style="left:1185px;top:988px;width:664px;height:17px;background:#fff;border:1px solid #a0a0a0;"></div><div class="r" style="left:1883px;top:988px;width:17px;height:17px;background:#fff;border:1px solid #a0a0a0;"></div><svg class="r" style="left:1169px;top:988px;" width="17" height="17" viewBox="0 0 17 17"><path d="M10.5 4.5 L6.5 8.5 L10.5 12.5 Z" fill="#222"/></svg><svg class="r" style="left:1883px;top:988px;" width="17" height="17" viewBox="0 0 17 17"><path d="M6.5 4.5 L10.5 8.5 L6.5 12.5 Z" fill="#222"/></svg><div class="r" style="left:0px;top:1010px;width:1920px;height:22px;background:#f3f2f1;"></div><div class="t" style="left:7.00px;top:1015.84px;font-size:12px;color:#333;transform:scaleX(0.9304);transform-origin:left top;">Select destination and press ENTER or choose Paste</div><div class="t" style="left:1276.00px;top:1015.84px;font-size:12px;color:#333;transform:scaleX(0.9060);transform-origin:left top;">Average:  2.365.742.369,00</div><div class="t" style="left:1426.00px;top:1015.84px;font-size:12px;color:#333;transform:scaleX(0.9699);transform-origin:left top;">Count: 2</div><div class="t" style="left:1486.00px;top:1015.84px;font-size:12px;color:#333;transform:scaleX(0.8977);transform-origin:left top;">Sum:  4.731.484.738,00</div><div class="r" style="left:1620px;top:1010px;width:40px;height:22px;background:#dcdcdc;"></div><svg class="r" style="left:1620px;top:1010px;" width="300" height="22" viewBox="0 0 300 22"><g fill="none" stroke="#444" stroke-width="1"><rect x="13.5" y="5.5" width="12" height="12"/><path d="M13.5 8.5 H25.5 M13.5 11.5 H25.5 M13.5 14.5 H25.5 M16.5 5.5 V17.5 M19.5 5.5 V17.5 M22.5 5.5 V17.5"/><rect x="52.5" y="5.5" width="13" height="12"/><rect x="55.5" y="8.5" width="7" height="6"/><path d="M56.5 10.5 H61.5 M56.5 12.5 H61.5"/><rect x="92.5" y="5.5" width="13" height="12"/><path d="M92.5 11.5 H99.5 V5.5"/><path d="M95.5 8 V11"/><path d="M125 11.5 H133"/><path d="M139 11.5 H239" stroke="#888"/><path d="M243 11.5 H251 M247 7.5 V15.5"/></g><rect x="186" y="6" width="5" height="11" fill="#444"/></svg><div class="t" style="left:1881.31px;top:1015.84px;font-size:12px;color:#333;transform:scaleX(0.8797);transform-origin:right top;">100%</div><div class="r" style="left:0px;top:1032px;width:1920px;height:48px;background:linear-gradient(90deg,#d6deea,#dfe6f1 50%,#d9e1ee);"></div><div class="r" style="left:0px;top:1032px;width:1920px;height:1px;background:#c9d0da;"></div><svg class="r" style="left:0px;top:0px;" width="160" height="34" viewBox="0 0 160 34"><g fill="none" stroke="#e8f3ec" stroke-width="1.2"><path d="M21.5 10.5 H36.5 V25.5 H23.5 L21.5 23.5 Z"/><path d="M25.5 10.5 V15.5 H32.5 V10.5"/><path d="M25.5 25.5 V20.5 H32.5 V25.5"/><path d="M56 25.5 L62 19 A5.5 5.5 0 0 0 55 11.5 L52 15"/><path d="M51.5 10.5 V16.5 H57.5"/><path d="M99 25.5 L93 19 A5.5 5.5 0 0 1 100 11.5 L103 15"/><path d="M103.5 10.5 V16.5 H97.5"/><path d="M72 15.5 L74.5 18 L77 15.5"/><path d="M110.5 15.5 L113 18 L115.5 15.5"/><path d="M132 14.5 H140"/><path d="M132.5 17 L136 20 L139.5 17"/></g></svg><div class="t" style="left:361.00px;top:10.50px;font-size:13px;color:#fff;transform:scaleX(0.8952);transform-origin:left top;">Monitoring Afiliasi CV PAS 2025  -  Excel</div><div class="r" style="left:784px;top:5px;width:368px;height:24px;background:#a1d0b4;"></div><div class="r" style="left:784px;top:28px;width:368px;height:1px;background:#9cc4ab;"></div><svg class="r" style="left:800px;top:8px;" width="24" height="18" viewBox="0 0 24 18"><circle cx="13" cy="7.5" r="4.8" fill="none" stroke="#1e3a2a" stroke-width="1.2"/><path d="M9.6 11 L5.5 15.5" stroke="#1e3a2a" stroke-width="1.3"/></svg><div class="t" style="left:833.00px;top:10.50px;font-size:13px;color:#1e3a2a;transform:scaleX(0.8740);transform-origin:left top;">Search</div><div class="r" style="left:1622px;top:7px;width:58px;height:19px;background:#fff;"></div><div class="t" style="left:1633.00px;top:10.50px;font-size:13px;color:#217346;transform:scaleX(0.8805);transform-origin:left top;">Sign in</div><svg class="r" style="left:1700px;top:0px;" width="220" height="34" viewBox="0 0 220 34"><g fill="none" stroke="#e8f3ec" stroke-width="1.2"><path d="M7 22 L14 11 L20 16 L11 25 Z"/><path d="M9 24 L11 26"/><path d="M17 9 L18 6 M20 12 L23 10 M19 9.5 L21.5 7"/><rect x="52.5" y="11.5" width="12" height="10"/><path d="M52.5 14.5 H64.5"/><path d="M58.5 20 V16 M56.5 17.5 L58.5 15.5 L60.5 17.5"/><path d="M100 15.5 H110"/><rect x="146.5" y="13.5" width="8" height="8"/><path d="M148.5 13.5 V11.5 H156.5 V19.5 H154.5"/><path d="M192 11 L202 21 M202 11 L192 21"/></g></svg><div class="t" style="left:17.00px;top:43.07px;font-size:13.5px;color:#444;transform:scaleX(0.9194);transform-origin:left top;">File</div><div class="t" style="left:68.00px;top:43.07px;font-size:13.5px;color:#262626;transform:scaleX(1.0552);transform-origin:left top;-webkit-text-stroke:0.4px #262626;">Home</div><div class="t" style="left:134.00px;top:43.07px;font-size:13.5px;color:#444;transform:scaleX(0.8617);transform-origin:left top;">WPS PDF</div><div class="t" style="left:216.00px;top:43.07px;font-size:13.5px;color:#444;transform:scaleX(0.9774);transform-origin:left top;">Insert</div><div class="t" style="left:277.00px;top:43.07px;font-size:13.5px;color:#444;transform:scaleX(0.9840);transform-origin:left top;">Draw</div><div class="t" style="left:337.00px;top:43.07px;font-size:13.5px;color:#444;transform:scaleX(0.9497);transform-origin:left top;">Page Layout</div><div class="t" style="left:438.00px;top:43.07px;font-size:13.5px;color:#444;transform:scaleX(0.9598);transform-origin:left top;">Formulas</div><div class="t" style="left:520.00px;top:43.07px;font-size:13.5px;color:#444;transform:scaleX(0.9819);transform-origin:left top;">Data</div><div class="t" style="left:576.00px;top:43.07px;font-size:13.5px;color:#444;transform:scaleX(0.9262);transform-origin:left top;">Review</div><div class="t" style="left:644.00px;top:43.07px;font-size:13.5px;color:#444;transform:scaleX(0.9649);transform-origin:left top;">View</div><div class="t" style="left:699.00px;top:43.07px;font-size:13.5px;color:#444;transform:scaleX(0.9913);transform-origin:left top;">Developer</div><div class="t" style="left:787.00px;top:43.07px;font-size:13.5px;color:#444;transform:scaleX(1.0084);transform-origin:left top;">Help</div><div class="t" style="left:843.00px;top:43.07px;font-size:13.5px;color:#444;transform:scaleX(1.0138);transform-origin:left top;">Nitro Pro</div><div class="t" style="left:926.00px;top:43.07px;font-size:13.5px;color:#444;transform:scaleX(1.0102);transform-origin:left top;">Acrobat</div><div class="r" style="left:68px;top:59px;width:38px;height:3px;background:#217346;"></div><div class="r" style="left:1828px;top:38px;width:79px;height:22px;background:#fff;border:1px solid #e1dfdd;border-radius:2px;"></div><svg class="r" style="left:1828px;top:38px;" width="79" height="22" viewBox="0 0 79 22"><g fill="none" stroke="#333" stroke-width="1"><path d="M7.5 9.5 V17.5 H18.5 V14"/><path d="M10 15 C10 10 13 8.5 17 8.5 M14.5 5.5 L18 8.5 L14.5 11.5"/><path d="M68.5 10 L71 12.5 L73.5 10"/></g></svg><div class="t" style="left:1851.00px;top:42.65px;font-size:14px;color:#2b2b2b;transform:scaleX(0.9368);transform-origin:left top;-webkit-text-stroke:0.35px #2b2b2b;">Share</div><div class="r" style="left:164px;top:68px;width:1px;height:88px;background:#d1d1d1;"></div><div class="r" style="left:396px;top:68px;width:1px;height:88px;background:#d1d1d1;"></div><div class="r" style="left:676px;top:68px;width:1px;height:88px;background:#d1d1d1;"></div><div class="r" style="left:832px;top:68px;width:1px;height:88px;background:#d1d1d1;"></div><div class="r" style="left:1320px;top:68px;width:1px;height:88px;background:#d1d1d1;"></div><div class="r" style="left:1463px;top:68px;width:1px;height:88px;background:#d1d1d1;"></div><div class="r" style="left:1663px;top:68px;width:1px;height:88px;background:#d1d1d1;"></div><div class="r" style="left:1763px;top:68px;width:1px;height:88px;background:#d1d1d1;"></div><div class="r" style="left:1847px;top:68px;width:1px;height:88px;background:#d1d1d1;"></div><div class="t" style="left:48.82px;top:146.34px;font-size:12px;color:#444;transform:scaleX(0.9734);transform-origin:center top;">Clipboard</div><div class="t" style="left:260.99px;top:146.34px;font-size:12px;color:#444;transform:scaleX(0.9578);transform-origin:center top;">Font</div><div class="t" style="left:501.82px;top:146.34px;font-size:12px;color:#444;transform:scaleX(0.9932);transform-origin:center top;">Alignment</div><div class="t" style="left:725.16px;top:146.34px;font-size:12px;color:#444;transform:scaleX(0.9372);transform-origin:center top;">Number</div><div class="t" style="left:1059.66px;top:146.34px;font-size:12px;color:#444;transform:scaleX(0.8568);transform-origin:center top;">Styles</div><div class="t" style="left:1378.66px;top:146.34px;font-size:12px;color:#444;transform:scaleX(0.8623);transform-origin:center top;">Cells</div><div class="t" style="left:1545.15px;top:146.34px;font-size:12px;color:#444;transform:scaleX(0.9811);transform-origin:center top;">Editing</div><div class="t" style="left:1686.37px;top:146.34px;font-size:12px;color:#444;transform:scaleX(0.8323);transform-origin:center top;">WPS PDF</div><div class="t" style="left:1766.24px;top:146.34px;font-size:12px;color:#444;transform:scaleX(0.9653);transform-origin:center top;">Adobe Acrobat</div><svg class="r" style="left:0px;top:0px;" width="1920" height="160" viewBox="0 0 1920 160"><g transform="translate(153,148)" fill="none" stroke="#555" stroke-width="1"><path d="M0.5 6 V0.5 H6"/><path d="M2.5 2.5 L7.5 7.5 M7.5 3.5 V7.5 H3.5"/></g><g transform="translate(385,148)" fill="none" stroke="#555" stroke-width="1"><path d="M0.5 6 V0.5 H6"/><path d="M2.5 2.5 L7.5 7.5 M7.5 3.5 V7.5 H3.5"/></g><g transform="translate(665,148)" fill="none" stroke="#555" stroke-width="1"><path d="M0.5 6 V0.5 H6"/><path d="M2.5 2.5 L7.5 7.5 M7.5 3.5 V7.5 H3.5"/></g><g transform="translate(821,148)" fill="none" stroke="#555" stroke-width="1"><path d="M0.5 6 V0.5 H6"/><path d="M2.5 2.5 L7.5 7.5 M7.5 3.5 V7.5 H3.5"/></g><path d="M1902 156 L1906.5 151.5 L1911 156" fill="none" stroke="#444" stroke-width="1.2"/></svg><svg class="r" style="left:0px;top:0px;" width="170" height="160" viewBox="0 0 170 160"><rect x="18.7" y="76.7" width="19.6" height="23" fill="#fbf7f1" stroke="#e8a040" stroke-width="1.4"/><path d="M22.5 79.5 V75.5 H26 C26 72 31 72 31 75.5 H34.5 V79.5 Z" fill="#fdfcff" stroke="#555" stroke-width="1"/><rect x="31.5" y="84.5" width="13" height="17" fill="#fff" stroke="#333" stroke-width="1.1"/><path d="M26 128 L28.5 130.5 L31 128" fill="none" stroke="#444" stroke-width="1.1"/><g fill="none" stroke="#333" stroke-width="1"><path d="M58.5 71.5 L62.8 82.5 M63.5 71.5 L59.2 82.5"/></g><circle cx="58.3" cy="84.8" r="2" fill="none" stroke="#3d7fc1" stroke-width="1.1"/><circle cx="63.8" cy="84.8" r="2" fill="none" stroke="#3d7fc1" stroke-width="1.1"/><g fill="none" stroke="#333" stroke-width="1.1"><path d="M59.5 108.5 H53.5 V95.5 H59 L60 96.5"/><path d="M59.5 98.5 H65.5 L68.5 101.5 V110.5 H59.5 Z"/><path d="M65.5 98.5 V101.5 H68.5"/><path d="M62 104.5 H66 M62 107 H66"/></g><path d="M113 103 L115.5 105.5 L118 103" fill="none" stroke="#444" stroke-width="1.1"/><path d="M55 127 L61 122 L66 127 L61 133 C59 132 57 130 55 127 Z" fill="#f7c27a" stroke="#e58c1f" stroke-width="1"/><path d="M57 129 L60 126 M59 131 L62 128" stroke="#e58c1f" stroke-width="0.8"/><path d="M61 122.5 L63.5 120 L68 124.5 L65.5 127 Z" fill="#fff" stroke="#333" stroke-width="1"/><path d="M65 121.5 L69 117.5 L71 119.5 L67 123.5" fill="none" stroke="#333" stroke-width="1.1"/></svg><div class="t" style="left:16.00px;top:107.42px;font-size:12.5px;color:#262626;transform:scaleX(0.8760);transform-origin:left top;">Paste</div><div class="t" style="left:73.00px;top:73.92px;font-size:12.5px;color:#262626;transform:scaleX(0.9253);transform-origin:left top;">Cut</div><div class="t" style="left:73.00px;top:97.92px;font-size:12.5px;color:#262626;transform:scaleX(0.9252);transform-origin:left top;">Copy</div><div class="t" style="left:73.00px;top:122.62px;font-size:12.5px;color:#262626;transform:scaleX(0.9314);transform-origin:left top;">Format Painter</div><div class="r" style="left:173px;top:76px;width:123px;height:23px;background:#fff;border:1px solid #c8c6c4;"></div><div class="t" style="left:176.00px;top:81.42px;font-size:12.5px;color:#262626;transform:scaleX(0.9597);transform-origin:left top;">Calibri</div><div class="r" style="left:298px;top:76px;width:43px;height:23px;background:#fff;border:1px solid #c8c6c4;"></div><div class="t" style="left:301.00px;top:81.42px;font-size:12.5px;color:#262626;transform:scaleX(0.8477);transform-origin:left top;">11</div><div class="r" style="left:173px;top:108px;width:22px;height:23px;background:#c8c6c4;border:1px solid #8a8886;"></div><div class="t" style="left:178.94px;top:113.15px;font-size:14px;color:#111;font-weight:bold;">B</div><svg class="r" style="left:0px;top:0px;" width="400" height="160" viewBox="0 0 400 160"><g fill="none" stroke="#444" stroke-width="1.1"><path d="M286 87 L288.5 89.5 L291 87"/><path d="M331 87 L333.5 89.5 L336 87"/><path d="M247 118 L249.5 120.5 L252 118"/><path d="M293 118 L295.5 120.5 L298 118"/><path d="M338 118 L340.5 120.5 L343 118"/><path d="M378 118 L380.5 120.5 L383 118"/></g><path d="M357.5 82.5 L359.8 80.3 L362 82.5" fill="none" stroke="#3d7fc1" stroke-width="1"/><path d="M381.5 80.3 L383.8 82.5 L386 80.3" fill="none" stroke="#3d7fc1" stroke-width="1"/><g fill="none" stroke="#333" stroke-width="1.15"><path d="M347.6 92 L352.7 79.3 L357.8 92 M349.5 87.3 H355.9"/><path d="M373.1 92 L377.2 82.3 L381.3 92 M374.6 88.4 H379.8"/><path d="M359.6 121.6 L363.3 111.3 L367 121.6 M361 117.8 H365.6"/></g><g stroke="#444" stroke-width="1" stroke-dasharray="1 1"><path d="M270 111.5 H286 M270 118.5 H286 M270.5 111 V126 M285.5 111 V126 M278 111 V126"/></g><path d="M270 125.5 H286" stroke="#333" stroke-width="1.5"/><rect x="262" y="110" width="1" height="18" fill="#d1d1d1"/><rect x="308" y="110" width="1" height="18" fill="#d1d1d1"/><rect x="316.5" y="124.5" width="15" height="3" fill="#fff" stroke="#777" stroke-width="1"/><path d="M318 117 L324 111 L329 116 L323 121 Z" fill="none" stroke="#444" stroke-width="1.1"/><path d="M326 112 C329 111 331 114 330 117" fill="none" stroke="#1f6fb5" stroke-width="1.3"/><rect x="355" y="124" width="16" height="3" fill="#e00"/></svg><div class="t" style="left:207.00px;top:113.00px;font-size:13px;color:#333;font-style:italic;font-family:"Liberation Serif",serif;">I</div><div class="t" style="left:228.00px;top:112.00px;font-size:13px;color:#333;">U</div><div class="r" style="left:227px;top:124px;width:10px;height:1.3px;background:#333;"></div><svg class="r" style="left:0px;top:0px;" width="700" height="160" viewBox="0 0 700 160"><g fill="none" stroke="#444" stroke-width="1.1"><path d="M409.0 79.5 H423.0"/><path d="M411.0 83.5 H421.0"/><path d="M409.0 87.5 H423.0"/><path d="M433.0 82.5 H447.0"/><path d="M435.0 86.5 H445.0"/><path d="M433.0 90.5 H447.0"/><path d="M457.0 86.5 H471.0"/><path d="M459.0 90.5 H469.0"/><path d="M457.0 94.5 H471.0"/><path d="M409 112.5 H423"/><path d="M409 116.5 H418"/><path d="M409 120.5 H423"/><path d="M409 124.5 H418"/><path d="M433.0 112.5 H447.0"/><path d="M435.5 116.5 H444.5"/><path d="M433.0 120.5 H447.0"/><path d="M435.5 124.5 H444.5"/><path d="M457 112.5 H471"/><path d="M462 116.5 H471"/><path d="M457 120.5 H471"/><path d="M462 124.5 H471"/><path d="M488 112.5 H502"/><path d="M494 116.5 H502"/><path d="M494 120.5 H502"/><path d="M488 124.5 H502"/><path d="M512 112.5 H526"/><path d="M518 116.5 H526"/><path d="M518 120.5 H526"/><path d="M512 124.5 H526"/><path d="M508 86 L510.5 88.5 L513 86"/><path d="M657 118 L659.5 120.5 L662 118"/></g><path d="M494 118.5 L490 118.5 M492 116.5 L490 118.5 L492 120.5" fill="none" stroke="#1f6fb5" stroke-width="1.1"/><path d="M513 118.5 L517 118.5 M515 116.5 L517 118.5 L515 120.5" fill="none" stroke="#1f6fb5" stroke-width="1.1"/><rect x="479" y="77" width="1" height="20" fill="#d1d1d1"/><rect x="479" y="110" width="1" height="20" fill="#d1d1d1"/><rect x="535" y="72" width="1" height="63" fill="#d1d1d1"/><path d="M492 93 L503 82 M499 82 H503 V86" fill="none" stroke="#1f6fb5" stroke-width="1.1"/><rect x="542.5" y="111.5" width="15" height="14" fill="none" stroke="#1f6fb5" stroke-width="1.1"/><path d="M542.5 115.5 H557.5 M542.5 121.5 H557.5" stroke="#1f6fb5" stroke-width="1"/><path d="M545 118.5 H555 M547 116.5 L545 118.5 L547 120.5 M553 116.5 L555 118.5 L553 120.5" fill="none" stroke="#333" stroke-width="1"/><path d="M551 90 C556 90 556 84 551 85 M553 93 L550 90.5 L553 88" fill="none" stroke="#1f6fb5" stroke-width="1.1"/></svg><div class="r" style="left:453px;top:76px;width:22px;height:23px;background:#c8c6c4;border:1px solid #8a8886;"></div><svg class="r" style="left:453px;top:76px;" width="22" height="23" viewBox="0 0 22 23"><g stroke="#333" stroke-width="1.1"><path d="M4 10.5 H18 M6 14.5 H16 M4 18.5 H18"/></g></svg><div class="t" style="left:488.00px;top:79.38px;font-size:9px;color:#333;transform:rotate(-45deg);transform-origin:left bottom;">ab</div><div class="t" style="left:544.00px;top:78.38px;font-size:9px;color:#555;">ab</div><div class="t" style="left:544.00px;top:87.38px;font-size:9px;color:#555;">c</div><div class="t" style="left:561.00px;top:80.92px;font-size:12.5px;color:#262626;transform:scaleX(0.9317);transform-origin:left top;">Wrap Text</div><div class="t" style="left:561.00px;top:112.92px;font-size:12.5px;color:#262626;transform:scaleX(0.9747);transform-origin:left top;">Merge &amp; Center</div><div class="r" style="left:685px;top:76px;width:140px;height:23px;background:#fff;border:1px solid #c8c6c4;"></div><div class="t" style="left:688.00px;top:81.42px;font-size:12.5px;color:#262626;">Accounting</div><svg class="r" style="left:0px;top:0px;" width="840" height="160" viewBox="0 0 840 160"><g fill="none" stroke="#444" stroke-width="1.1"><path d="M816 87 L818.5 89.5 L821 87"/><path d="M711 118 L713.5 120.5 L716 118"/></g><rect x="688.5" y="112.5" width="15" height="10" fill="none" stroke="#333" stroke-width="1.1"/><rect x="696" y="117" width="7" height="9" rx="1" fill="#fbd7a0" stroke="#d9822b" stroke-width="1"/><rect x="774" y="110" width="1" height="18" fill="#d1d1d1"/><circle cx="759" cy="116.5" r="3" fill="#222"/><path d="M761.5 117 C762 121 760 123.5 756.5 125" fill="none" stroke="#222" stroke-width="1.8"/><path d="M790 114.5 H784 M786 112.5 L784 114.5 L786 116.5" fill="none" stroke="#1f6fb5" stroke-width="1.1"/><path d="M806 121.5 H813 M811 119.5 L813 121.5 L811 123.5" fill="none" stroke="#1f6fb5" stroke-width="1.1"/></svg><div class="t" style="left:690.00px;top:113.38px;font-size:9px;color:#333;font-weight:bold;">C</div><svg class="r" style="left:720px;top:105px;" width="30" height="25" viewBox="0 0 30 25"><g fill="none" stroke="#333" stroke-width="1.1"><circle cx="10.5" cy="9.8" r="2.6"/><circle cx="19.5" cy="17.8" r="2.6"/><path d="M20.5 7 L9.5 20.5"/></g></svg><div class="t" style="left:792.50px;top:111.23px;font-size:8px;color:#333;">0</div><div class="t" style="left:785.50px;top:118.73px;font-size:8px;color:#333;">.00</div><div class="t" style="left:806.50px;top:111.23px;font-size:8px;color:#333;">.00</div><div class="t" style="left:814.00px;top:118.73px;font-size:8px;color:#333;">0</div><svg class="r" style="left:0px;top:0px;" width="1000" height="160" viewBox="0 0 1000 160"><rect x="864.5" y="75.5" width="27" height="21" fill="#fff" stroke="#333" stroke-width="1"/><rect x="870" y="76" width="12" height="5" fill="#f4787e"/><rect x="870" y="86" width="5" height="5" fill="#62a8e5"/><rect x="875" y="86" width="7" height="5" fill="#fff"/><rect x="870" y="91" width="12" height="5" fill="#f4787e"/><rect x="875" y="81" width="7" height="5" fill="#f4787e"/><path d="M864.5 81.5 H891.5 M864.5 86.5 H891.5 M864.5 91.5 H891.5 M869.5 75.5 V96.5 M881.5 75.5 V96.5 M886.5 75.5 V96.5" fill="none" stroke="#555" stroke-width="0.8"/><rect x="930.5" y="75.5" width="28" height="21" fill="#fff" stroke="#333" stroke-width="1"/><rect x="940" y="82" width="18" height="14" fill="#62a8e5"/><path d="M930.5 82.5 H958.5 M930.5 89.5 H958.5 M939.5 75.5 V96.5 M949.5 75.5 V96.5" fill="none" stroke="#333" stroke-width="0.9"/><path d="M946 97 L960 83" stroke="#3d7fc1" stroke-width="2.5"/><path d="M942 101 C942 97 945 95 947 96 L945 99 Z" fill="#3d7fc1"/><g fill="none" stroke="#444" stroke-width="1.1"><path d="M906 127 L908.5 129.5 L911 127"/><path d="M956 127 L958.5 129.5 L961 127"/></g></svg><div class="t" style="left:846.73px;top:106.92px;font-size:12.5px;color:#262626;transform:scaleX(0.9753);transform-origin:center top;">Conditional</div><div class="t" style="left:842.63px;top:122.62px;font-size:12.5px;color:#262626;transform:scaleX(0.9708);transform-origin:center top;">Formatting</div><div class="t" style="left:915.87px;top:106.92px;font-size:12.5px;color:#262626;transform:scaleX(0.9064);transform-origin:center top;">Format as</div><div class="t" style="left:924.06px;top:122.62px;font-size:12.5px;color:#262626;transform:scaleX(0.8700);transform-origin:center top;">Table</div><div class="r" style="left:975px;top:70px;width:336px;height:62px;background:#fcfcfc;border:1px solid #d6d6d6;"></div><div class="r" style="left:979px;top:76px;width:100px;height:22px;background:#a5a5a5;"></div><div class="r" style="left:1085px;top:76px;width:100px;height:22px;background:#ffc000;"></div><div class="r" style="left:1191px;top:76px;width:100px;height:22px;background:#5b9bd5;"></div><div class="r" style="left:979px;top:104px;width:100px;height:22px;background:#70ad47;"></div><div class="r" style="left:1083px;top:102px;width:105px;height:27px;background:#fff;border:2px solid #a8a8a8;"></div><div class="t" style="left:983.00px;top:79.65px;font-size:14px;color:#fff;transform:scaleX(0.8896);transform-origin:left top;">Accent3</div><div class="t" style="left:1089.00px;top:79.65px;font-size:14px;color:#fff;transform:scaleX(0.8896);transform-origin:left top;">Accent4</div><div class="t" style="left:1195.00px;top:79.65px;font-size:14px;color:#fff;transform:scaleX(0.8896);transform-origin:left top;">Accent5</div><div class="t" style="left:983.00px;top:107.65px;font-size:14px;color:#fff;transform:scaleX(0.8896);transform-origin:left top;">Accent6</div><div class="t" style="left:1089.00px;top:107.15px;font-size:14px;color:#111;transform:scaleX(0.9386);transform-origin:left top;">Comma</div><div class="t" style="left:1195.00px;top:107.15px;font-size:14px;color:#111;transform:scaleX(0.9494);transform-origin:left top;">Comma [0]</div><div class="r" style="left:1295px;top:70px;width:16px;height:62px;background:#f8f8f8;border:1px solid #d6d6d6;"></div><svg class="r" style="left:0px;top:0px;" width="1320" height="160" viewBox="0 0 1320 160"><g fill="none" stroke="#444" stroke-width="1.1"><path d="M1300 82 L1303 79 L1306 82"/><path d="M1300 98 L1303 101 L1306 98"/><path d="M1300 117.5 H1306"/><path d="M1300 120 L1303 123 L1306 120"/></g><rect x="1296" y="90" width="14" height="1" fill="#d6d6d6"/><rect x="1296" y="110" width="14" height="1" fill="#d6d6d6"/></svg><svg class="r" style="left:0px;top:0px;" width="1460" height="160" viewBox="0 0 1460 160"><g fill="#fff" stroke="#333" stroke-width="1"><rect x="1336.5" y="75.5" width="28" height="21"/><rect x="1378.5" y="75.5" width="28" height="21"/><rect x="1420.5" y="75.5" width="27" height="21"/></g><rect x="1345" y="82" width="21" height="7" fill="#62a8e5"/><rect x="1387" y="82" width="12" height="7" fill="#62a8e5"/><rect x="1426" y="82" width="16" height="7" fill="#62a8e5"/><g fill="none" stroke="#333" stroke-width="0.9"><path d="M1336.5 82.5 H1364.5 M1336.5 89.5 H1364.5 M1346.5 75.5 V96.5 M1355.5 75.5 V96.5"/><path d="M1378.5 82.5 H1406.5 M1378.5 89.5 H1406.5 M1387.5 75.5 V96.5 M1397.5 75.5 V96.5"/><path d="M1420.5 82.5 H1447.5 M1420.5 89.5 H1447.5 M1426.5 75.5 V96.5 M1441.5 75.5 V96.5 M1426.5 71.5 H1441.5 M1426.5 70 V73 M1441.5 70 V73"/></g><path d="M1350 86 H1335 M1339 82 L1335 86 L1339 90" fill="none" stroke="#3d7fc1" stroke-width="1.3"/><path d="M1400 80 L1408 92 M1408 80 L1400 92" stroke="#e03c3c" stroke-width="1.2"/><g fill="none" stroke="#444" stroke-width="1.1"><path d="M1346.5 127 L1349 129.5 L1351.5 127"/><path d="M1388.5 127 L1391 129.5 L1393.5 127"/><path d="M1431 127 L1433.5 129.5 L1436 127"/></g></svg><div class="t" style="left:1333.87px;top:106.92px;font-size:12.5px;color:#262626;transform:scaleX(0.8956);transform-origin:center top;">Insert</div><div class="t" style="left:1373.43px;top:106.92px;font-size:12.5px;color:#262626;transform:scaleX(0.8856);transform-origin:center top;">Delete</div><div class="t" style="left:1414.21px;top:106.92px;font-size:12.5px;color:#262626;transform:scaleX(0.9346);transform-origin:center top;">Format</div><svg class="r" style="left:0px;top:0px;" width="1660" height="160" viewBox="0 0 1660 160"><path d="M1489 73 H1477.5 L1483.5 78 L1477.5 84 H1489" fill="none" stroke="#333" stroke-width="1.2"/><rect x="1475.5" y="94.5" width="15" height="13" fill="#fff" stroke="#333" stroke-width="1.1"/><path d="M1475.5 97.5 H1490.5" stroke="#333" stroke-width="1"/><path d="M1483 99 V105 M1480.5 102.5 L1483 105 L1485.5 102.5" fill="none" stroke="#1f6fb5" stroke-width="1.1"/><path d="M1476 126 L1484 118 L1490 124 L1482 132 Z" fill="#fff" stroke="#b53fb5" stroke-width="1.2"/><path d="M1476 126 L1480 122 L1486 128 L1482 132 Z" fill="#d28ad2"/><g fill="none" stroke="#444" stroke-width="1.1"><path d="M1555 77 L1557.5 79.5 L1560 77"/><path d="M1513 100 L1515.5 102.5 L1518 100"/><path d="M1525.5 123 L1528 125.5 L1530.5 123"/><path d="M1599 127 L1601.5 129.5 L1604 127"/><path d="M1646.5 127 L1649 129.5 L1651.5 127"/></g><path d="M1586.5 79.5 H1602 L1596.5 86 V94 L1592 91 V86 Z" fill="none" stroke="#333" stroke-width="1.1"/><circle cx="1636" cy="82.5" r="10" fill="none" stroke="#333" stroke-width="1.1"/><path d="M1629 90 L1617.5 100.5" stroke="#333" stroke-width="1.2"/></svg><div class="t" style="left:1574.00px;top:73.92px;font-size:12.5px;color:#3d7fc1;">A</div><div class="t" style="left:1574.00px;top:87.42px;font-size:12.5px;color:#333;">Z</div><div class="t" style="left:1494.00px;top:72.42px;font-size:12.5px;color:#262626;transform:scaleX(0.9530);transform-origin:left top;">AutoSum</div><div class="t" style="left:1494.50px;top:95.42px;font-size:12.5px;color:#262626;transform:scaleX(0.8768);transform-origin:left top;">Fill</div><div class="t" style="left:1494.50px;top:118.42px;font-size:12.5px;color:#262626;transform:scaleX(0.9039);transform-origin:left top;">Clear</div><div class="t" style="left:1570.13px;top:106.92px;font-size:12.5px;color:#262626;transform:scaleX(0.9500);transform-origin:center top;">Sort &amp;</div><div class="t" style="left:1568.11px;top:122.62px;font-size:12.5px;color:#262626;transform:scaleX(0.9360);transform-origin:center top;">Filter</div><div class="t" style="left:1613.94px;top:106.92px;font-size:12.5px;color:#262626;transform:scaleX(0.9688);transform-origin:center top;">Find &amp;</div><div class="t" style="left:1609.13px;top:122.62px;font-size:12.5px;color:#262626;transform:scaleX(0.8923);transform-origin:center top;">Select</div><svg class="r" style="left:0px;top:0px;" width="1920" height="160" viewBox="0 0 1920 160"><path d="M1682.5 72.5 H1700 L1704.5 77 V98.5 H1682.5 Z" fill="#fff" stroke="#555" stroke-width="1.1"/><rect x="1679" y="76" width="19" height="10" fill="#d9414a"/><circle cx="1701.5" cy="93" r="6" fill="#fff" stroke="#555" stroke-width="1.1"/><path d="M1701.5 90 V96 M1698.5 93 H1704.5" stroke="#333" stroke-width="1"/><path d="M1722 99 L1724 82.5 L1732 79.5 L1741.5 89.5 L1738.5 97.7 Z" fill="#f7f3f3" stroke="#5e5e5e" stroke-width="1.1" stroke-linejoin="round"/><path d="M1731 77.5 L1735.5 73 L1749.5 87 L1745 91.5 Z" fill="#f7f3f3" stroke="#5e5e5e" stroke-width="1.1" stroke-linejoin="round"/><circle cx="1730.3" cy="90.8" r="2.2" fill="none" stroke="#d9414a" stroke-width="1.1"/><path d="M1722.5 98.5 L1728.8 92.5" stroke="#d9414a" stroke-width="1"/><path d="M1797.5 74.5 H1810 L1815.5 80 V97.5 H1797.5 Z" fill="#fff" stroke="#4a6fc7" stroke-width="1.1"/><path d="M1802 88 C1805 84 1806 80 1805 79 C1804 80 1806 85 1810 88 C1807 87 1803 88 1802 88" fill="none" stroke="#b05aa8" stroke-width="0.9"/><g transform="rotate(-45 1815 94)" fill="none" stroke="#4a6fc7" stroke-width="1.5"><rect x="1807" y="91.5" width="9" height="5" rx="2.5" fill="#f3f2f1"/><rect x="1813" y="91.5" width="9" height="5" rx="2.5" fill="#f3f2f1"/></g></svg><div class="t" style="left:1680.50px;top:77.73px;font-size:8px;color:#fff;font-weight:bold;">PDF</div><div class="t" style="left:1674.24px;top:106.92px;font-size:12.5px;color:#262626;transform:scaleX(0.9062);transform-origin:center top;">Create</div><div class="t" style="left:1680.00px;top:122.62px;font-size:12.5px;color:#262626;transform:scaleX(0.8400);transform-origin:center top;">PDF</div><div class="t" style="left:1721.99px;top:106.92px;font-size:12.5px;color:#262626;transform:scaleX(0.9193);transform-origin:center top;">Sign</div><div class="t" style="left:1787.24px;top:106.92px;font-size:12.5px;color:#262626;transform:scaleX(0.9062);transform-origin:center top;">Create</div><div class="t" style="left:1788.29px;top:122.62px;font-size:12.5px;color:#262626;transform:scaleX(0.8468);transform-origin:center top;">a PDF</div><div class="r" style="left:5px;top:171px;width:102px;height:26px;background:#fff;border:1px solid #c6c6c6;"></div><div class="t" style="left:12.00px;top:178.00px;font-size:13px;color:#333;transform:scaleX(0.8424);transform-origin:left top;">C3</div><svg class="r" style="left:0px;top:160px;" width="260" height="60" viewBox="0 0 260 60"><path d="M92.5 21.5 H100.5 L96.5 26 Z" fill="#666"/><circle cx="122" cy="19.5" r="1" fill="#9a9a9a"/><circle cx="122" cy="24" r="1" fill="#9a9a9a"/><circle cx="122" cy="28.5" r="1" fill="#9a9a9a"/><path d="M150.5 19 L160.5 29 M160.5 19 L150.5 29" stroke="#aaa" stroke-width="1.2"/><path d="M186.5 24.5 L190.5 28.5 L198.5 19.5" fill="none" stroke="#aaa" stroke-width="1.2"/></svg><div class="r" style="left:137px;top:171px;width:110px;height:26px;background:#fff;border:1px solid #d0d0d0;"></div><svg class="r" style="left:0px;top:160px;" width="260" height="60" viewBox="0 0 260 60"><path d="M150.5 19 L160.5 29 M160.5 19 L150.5 29" stroke="#b4b4b4" stroke-width="1.2"/><path d="M186.5 24.5 L190.5 28.5 L198.5 19.5" fill="none" stroke="#b4b4b4" stroke-width="1.2"/></svg><div class="t" style="left:223.00px;top:177.65px;font-size:14px;color:#333;font-style:italic;font-family:"Liberation Serif",serif;">f</div><div class="t" style="left:228.00px;top:181.46px;font-size:9.5px;color:#333;font-style:italic;font-family:"Liberation Serif",serif;">x</div><div class="r" style="left:250px;top:171px;width:1665px;height:46px;background:#fff;border:1px solid #c6c6c6;"></div><div class="t" style="left:262.00px;top:178.00px;font-size:13px;color:#333;transform:scaleX(0.9635);transform-origin:left top;">=SUM(C5:C311)</div><svg class="r" style="left:1900px;top:175px;" width="14" height="12" viewBox="0 0 14 12"><path d="M2.5 8.5 L6.5 4.5 L10.5 8.5" fill="none" stroke="#555" stroke-width="1.3"/></svg><svg class="r" style="left:0px;top:0px;" width="1920" height="1080" viewBox="0 0 1920 1080"><path d="M20 1065 H41 A5 5 0 0 0 41 1055 A7 7 0 0 0 28 1053 A5.5 5.5 0 0 0 20 1065 Z" fill="#bcd6f2" stroke="#8fb6e0" stroke-width="0.8"/><circle cx="38" cy="1046.5" r="8" fill="#c42b1c"/><rect x="595" y="1045" width="11" height="11" fill="#1a8fe3"/><rect x="607" y="1045" width="11" height="11" fill="#1a8fe3"/><rect x="595" y="1057" width="11" height="11" fill="#0d7ad6"/><rect x="607" y="1057" width="11" height="11" fill="#0d7ad6"/><rect x="632" y="1041" width="217" height="30" rx="15" fill="#f4f6fb" stroke="#d6dbe6" stroke-width="1"/><circle cx="650" cy="1055" r="6" fill="none" stroke="#222" stroke-width="1.8"/><path d="M654.5 1059.5 L658 1063" stroke="#222" stroke-width="2"/><ellipse cx="823" cy="1066.5" rx="23" ry="2.6" fill="#e9d6b6"/><path d="M807 1044 L802.5 1052 L805.5 1054 L811 1050.5 L814 1058.5 L833 1058.5 L836 1052 L829 1049.5 L816 1047.5 Z" fill="#f6f6f8"/><g stroke="#2a2a33" stroke-width="1.3" fill="none"><path d="M805 1046.5 L809 1049 M806.5 1044.5 L811 1048 M811 1047 L814 1051 M815 1048 L818 1056 M819 1048 L822 1057 M823 1049 L826 1057 M827 1049.5 L830 1057 M831 1050 L834 1055"/><path d="M835 1051 C838 1054 838 1058 839.5 1062" stroke-width="1.8"/><path d="M803 1052 L805 1053"/></g><g stroke="#808088" stroke-width="1.2"><path d="M816 1058 V1066 M818.5 1058 V1066 M830 1058 V1066 M832.5 1058 V1066"/></g><rect x="869" y="1045" width="17" height="16" fill="#f0f0f0" stroke="#ddd" stroke-width="0.8"/><rect x="863" y="1050" width="14" height="17" fill="#222"/><rect x="868" y="1050" width="9" height="12" fill="#aaa"/><circle cx="919" cy="1055.5" r="10.5" fill="#fff" stroke="#2b7a54" stroke-width="2.2"/><path d="M911.5 1062.5 L909.5 1067.5 L914.5 1065.5" fill="#2b7a54" stroke="#2b7a54" stroke-width="1.2" stroke-linejoin="round"/><path d="M914.5 1050.5 C914 1055 918 1060 923.5 1060.5 L924 1058 L921.5 1057 L920.5 1058 C919 1057.5 917 1055.5 916.5 1054 L917.5 1053 L916.5 1050.5 Z" fill="#2b7a54"/><circle cx="963" cy="1056" r="12" fill="#1b7fd4"/><path d="M963 1044 A12 12 0 0 1 975 1056 C975 1059 973 1061 970 1061 L962 1061 C962 1056 966 1052 970 1052 C967 1048 957 1047 952 1053 A12 12 0 0 1 963 1044 Z" fill="#4cc35e"/><path d="M952 1053 C955 1048 965 1047 969 1052 C964 1052 961 1056 962 1060 C963 1065 969 1067 973 1064 A12 12 0 0 1 951 1057 Z" fill="#1b9de8"/><ellipse cx="967" cy="1057" rx="4" ry="3.2" fill="#dfe6f1"/><path d="M955 1064 C959 1069 968 1069 973 1064" fill="none" stroke="#0d4f9e" stroke-width="2.5"/><path d="M995 1048 H1005 L1007 1050 H1019 V1066 H995 Z" fill="#f7c94a"/><rect x="995" y="1052" width="24" height="14" fill="#ffd966"/><rect x="1000" y="1059" width="14" height="7" rx="1" fill="#1a7fd1"/><rect x="996" y="1045" width="10" height="4" rx="1" fill="#e2a925"/><path d="M1050 1056 L1038.72 1051.90 A12 12 0 0 1 1059.19 1048.29 Z" fill="#db4437"/><path d="M1050 1056 L1059.19 1048.29 A12 12 0 0 1 1052.08 1067.82 Z" fill="#f4b400"/><path d="M1050 1056 L1052.08 1067.82 A12 12 0 0 1 1038.72 1051.90 Z" fill="#0f9d58"/><circle cx="1050" cy="1056" r="5.5" fill="#fff"/><circle cx="1050" cy="1056" r="4.3" fill="#4285f4"/><rect x="1053" y="1039" width="15" height="15" rx="3" fill="#fff"/><rect x="1055" y="1040" width="11" height="12" rx="2" fill="#9b1c1c"/><circle cx="1060.5" cy="1045.5" r="2.5" fill="#f0d0c0"/><circle cx="1095.5" cy="1056" r="12" fill="#1ed760"/><path d="M1088 1052 C1093 1050 1099 1050.5 1103.5 1053 M1089 1056 C1093 1054.5 1098 1055 1102 1057 M1090 1060 C1093.5 1059 1097 1059.3 1100.5 1061" fill="none" stroke="#111" stroke-width="2" stroke-linecap="round"/><rect x="1129" y="1045" width="15" height="13" fill="#fff" stroke="#c62828" stroke-width="2" stroke-dasharray="2.5 1.5"/><path d="M1141 1050 L1141 1064 M1141 1058 L1149 1058" stroke="#888" stroke-width="2"/><circle cx="1141" cy="1065.5" r="2.5" fill="none" stroke="#1e88e5" stroke-width="1.8"/><circle cx="1149" cy="1057" r="2.5" fill="none" stroke="#1e88e5" stroke-width="1.8"/><circle cx="1183.5" cy="1056" r="11.5" fill="#e53950"/><path d="M1177.5 1064 L1183.5 1048 L1189.5 1064" fill="none" stroke="#fff" stroke-width="2.3"/><rect x="1208" y="1037.5" width="34" height="37" rx="4" fill="#eef1f8" stroke="#dfe3ec" stroke-width="0.8"/><rect x="1220" y="1044.5" width="19" height="21" rx="1.5" fill="#21a366"/><rect x="1220" y="1051.5" width="19" height="7" fill="#107c41"/><rect x="1229" y="1044.5" width="10" height="21" fill="#185c37" opacity="0.45"/><rect x="1215" y="1049" width="13" height="13" rx="1.5" fill="#107c41"/><path d="M1218.5 1052 L1224.5 1059 M1224.5 1052 L1218.5 1059" stroke="#fff" stroke-width="1.6"/><rect x="1219" y="1072" width="16" height="2.5" rx="1.2" fill="#0067c0"/><path d="M1271 1056 L1259.72 1051.90 A12 12 0 0 1 1280.19 1048.29 Z" fill="#db4437"/><path d="M1271 1056 L1280.19 1048.29 A12 12 0 0 1 1273.08 1067.82 Z" fill="#f4b400"/><path d="M1271 1056 L1273.08 1067.82 A12 12 0 0 1 1259.72 1051.90 Z" fill="#0f9d58"/><circle cx="1271" cy="1056" r="5.5" fill="#fff"/><circle cx="1271" cy="1056" r="4.3" fill="#4285f4"/><path d="M1275 1046 L1279 1052 L1282 1045" fill="none" stroke="#666" stroke-width="1.2"/><rect x="1304" y="1045" width="22" height="21" rx="3.5" fill="#b30b00"/><path d="M1307.5 1062 C1311 1057 1314 1051 1314 1048.5 C1313 1047.5 1312 1050 1314 1054 C1316 1058 1320 1060 1323 1059.5 C1321 1057.5 1314 1058 1307.5 1062 Z" fill="none" stroke="#fff" stroke-width="1.4"/><g fill="#8a8f98"><rect x="916" y="1072.5" width="6" height="2.5" rx="1"/><rect x="960" y="1072.5" width="6" height="2.5" rx="1"/><rect x="1003" y="1072.5" width="6" height="2.5" rx="1"/><rect x="1047" y="1072.5" width="6" height="2.5" rx="1"/><rect x="1092" y="1072.5" width="6" height="2.5" rx="1"/><rect x="1311" y="1072.5" width="6" height="2.5" rx="1"/></g><path d="M1728.5 1059 L1733.5 1054 L1738.5 1059" fill="none" stroke="#222" stroke-width="1.3"/><path d="M1758.5 1053.5 A10 10 0 0 1 1773.5 1053.5 M1761 1056 A6.5 6.5 0 0 1 1771 1056 M1763.5 1058.5 A3 3 0 0 1 1768.5 1058.5" fill="none" stroke="#222" stroke-width="1.3"/><circle cx="1766" cy="1061" r="1.2" fill="#222"/><path d="M1782.5 1052.5 H1785.5 L1789.5 1049.5 V1062 L1785.5 1059 H1782.5 Z" fill="none" stroke="#222" stroke-width="1.1"/><path d="M1792 1053 A4 4 0 0 1 1792 1058.5 M1794.5 1051 A7 7 0 0 1 1794.5 1060.5" fill="none" stroke="#222" stroke-width="1.1"/><path d="M1887 1060 C1888 1057 1887 1050 1892 1049.5 C1897 1050 1896 1057 1897.5 1060 Z" fill="#222"/><rect x="1890" y="1061" width="4" height="2" fill="#222"/></svg><div class="t" style="left:35.22px;top:1042.04px;font-size:10px;color:#fff;font-weight:bold;">2</div><div class="t" style="left:51.00px;top:1041.34px;font-size:12px;color:#222;transform:scaleX(0.9324);transform-origin:left top;">30°C</div><div class="t" style="left:50.50px;top:1057.34px;font-size:12px;color:#444;transform:scaleX(0.9501);transform-origin:left top;">Berawan</div><div class="t" style="left:668.00px;top:1049.57px;font-size:13.5px;color:#555;transform:scaleX(0.9351);transform-origin:left top;">Search</div><div class="t" style="left:1846.47px;top:1042.34px;font-size:12px;color:#222;transform:scaleX(0.9324);transform-origin:right top;">15:16</div><div class="t" style="left:1816.44px;top:1058.34px;font-size:12px;color:#222;transform:scaleX(1.0157);transform-origin:right top;">31/01/2026</div><div class="t" style="left:1889.50px;top:1052.50px;font-size:6.5px;color:#fff;font-weight:bold;">z</div><div class="t" style="left:1895.00px;top:1044.07px;font-size:7px;color:#222;font-weight:bold;">z</div>
</body></html>
